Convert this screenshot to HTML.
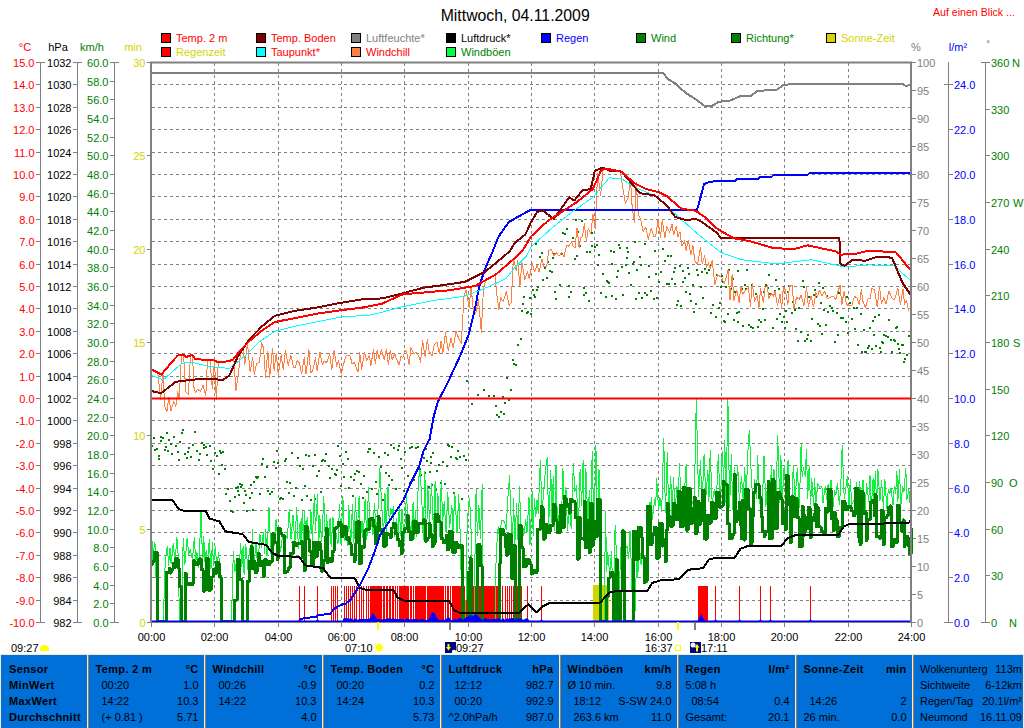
<!DOCTYPE html>
<html><head><meta charset="utf-8"><style>
html,body{margin:0;padding:0;background:#fff;width:1024px;height:728px;overflow:hidden}
svg{display:block;font-family:"Liberation Sans",sans-serif}
</style></head><body>
<svg width="1024" height="728" viewBox="0 0 1024 728">
<text x="515.2" y="21" fill="#000" text-anchor="middle" font-size="15.8" font-weight="normal" >Mittwoch, 04.11.2009</text>
<text x="933" y="16" fill="#ff0000" text-anchor="start" font-size="10.6" font-weight="normal" >Auf einen Blick ...</text>
<rect x="161.5" y="33.5" width="9" height="9" fill="#ff0000" stroke="#000" stroke-width="1"/>
<text x="176" y="42" fill="#ff0000" text-anchor="start" font-size="11" font-weight="normal" >Temp. 2 m</text>
<rect x="161.5" y="47.5" width="9" height="9" fill="#ff0000" stroke="#000" stroke-width="1"/>
<text x="176" y="56" fill="#d4d400" text-anchor="start" font-size="11" font-weight="normal" >Regenzeit</text>
<rect x="256.5" y="33.5" width="9" height="9" fill="#800000" stroke="#000" stroke-width="1"/>
<text x="271" y="42" fill="#ff0000" text-anchor="start" font-size="11" font-weight="normal" >Temp. Boden</text>
<rect x="256.5" y="47.5" width="9" height="9" fill="#00ffff" stroke="#000" stroke-width="1"/>
<text x="271" y="56" fill="#ff0000" text-anchor="start" font-size="11" font-weight="normal" >Taupunkt*</text>
<rect x="351.5" y="33.5" width="9" height="9" fill="#808080" stroke="#000" stroke-width="1"/>
<text x="366" y="42" fill="#808080" text-anchor="start" font-size="11" font-weight="normal" >Luftfeuchte*</text>
<rect x="351.5" y="47.5" width="9" height="9" fill="#ff8040" stroke="#000" stroke-width="1"/>
<text x="366" y="56" fill="#ff0000" text-anchor="start" font-size="11" font-weight="normal" >Windchill</text>
<rect x="446.5" y="33.5" width="9" height="9" fill="#000000" stroke="#000" stroke-width="1"/>
<text x="461" y="42" fill="#000" text-anchor="start" font-size="11" font-weight="normal" >Luftdruck*</text>
<rect x="446.5" y="47.5" width="9" height="9" fill="#00ff40" stroke="#000" stroke-width="1"/>
<text x="461" y="56" fill="#008000" text-anchor="start" font-size="11" font-weight="normal" >Windböen</text>
<rect x="541.5" y="33.5" width="9" height="9" fill="#0000ff" stroke="#000" stroke-width="1"/>
<text x="556" y="42" fill="#0000ff" text-anchor="start" font-size="11" font-weight="normal" >Regen</text>
<rect x="636.5" y="33.5" width="9" height="9" fill="#008000" stroke="#000" stroke-width="1"/>
<text x="651" y="42" fill="#008000" text-anchor="start" font-size="11" font-weight="normal" >Wind</text>
<rect x="731.5" y="33.5" width="9" height="9" fill="#008000" stroke="#000" stroke-width="1"/>
<text x="746" y="42" fill="#008000" text-anchor="start" font-size="11" font-weight="normal" >Richtung*</text>
<rect x="826.5" y="33.5" width="9" height="9" fill="#d4d400" stroke="#000" stroke-width="1"/>
<text x="841" y="42" fill="#d4d400" text-anchor="start" font-size="11" font-weight="normal" >Sonne-Zeit</text>
<text x="25" y="51" fill="#ff0000" text-anchor="middle" font-size="11" font-weight="normal" >°C</text>
<text x="58" y="51" fill="#000" text-anchor="middle" font-size="11" font-weight="normal" >hPa</text>
<text x="92" y="51" fill="#008000" text-anchor="middle" font-size="11" font-weight="normal" >km/h</text>
<text x="133" y="51" fill="#d4d400" text-anchor="middle" font-size="11" font-weight="normal" >min</text>
<text x="916" y="51" fill="#808080" text-anchor="middle" font-size="11" font-weight="normal" >%</text>
<text x="958" y="51" fill="#0000ff" text-anchor="middle" font-size="11" font-weight="normal" >l/m²</text>
<text x="988" y="47" fill="#008000" text-anchor="middle" font-size="9" font-weight="normal" >°</text>
<line x1="40.5" y1="62" x2="40.5" y2="622" stroke="#808080" stroke-width="1" />
<line x1="36" y1="62.5" x2="45" y2="62.5" stroke="#808080" stroke-width="1" />
<line x1="36" y1="622.5" x2="45" y2="622.5" stroke="#808080" stroke-width="1" />
<line x1="36" y1="62.5" x2="41" y2="62.5" stroke="#808080" stroke-width="1" />
<text x="34.5" y="66.5" fill="#ff0000" text-anchor="end" font-size="11" font-weight="normal" >15.0</text>
<line x1="36" y1="84.5" x2="41" y2="84.5" stroke="#808080" stroke-width="1" />
<text x="34.5" y="88.5" fill="#ff0000" text-anchor="end" font-size="11" font-weight="normal" >14.0</text>
<line x1="36" y1="107.5" x2="41" y2="107.5" stroke="#808080" stroke-width="1" />
<text x="34.5" y="111.5" fill="#ff0000" text-anchor="end" font-size="11" font-weight="normal" >13.0</text>
<line x1="36" y1="129.5" x2="41" y2="129.5" stroke="#808080" stroke-width="1" />
<text x="34.5" y="133.5" fill="#ff0000" text-anchor="end" font-size="11" font-weight="normal" >12.0</text>
<line x1="36" y1="152.5" x2="41" y2="152.5" stroke="#808080" stroke-width="1" />
<text x="34.5" y="156.5" fill="#ff0000" text-anchor="end" font-size="11" font-weight="normal" >11.0</text>
<line x1="36" y1="174.5" x2="41" y2="174.5" stroke="#808080" stroke-width="1" />
<text x="34.5" y="178.5" fill="#ff0000" text-anchor="end" font-size="11" font-weight="normal" >10.0</text>
<line x1="36" y1="196.5" x2="41" y2="196.5" stroke="#808080" stroke-width="1" />
<text x="34.5" y="200.5" fill="#ff0000" text-anchor="end" font-size="11" font-weight="normal" >9.0</text>
<line x1="36" y1="219.5" x2="41" y2="219.5" stroke="#808080" stroke-width="1" />
<text x="34.5" y="223.5" fill="#ff0000" text-anchor="end" font-size="11" font-weight="normal" >8.0</text>
<line x1="36" y1="241.5" x2="41" y2="241.5" stroke="#808080" stroke-width="1" />
<text x="34.5" y="245.5" fill="#ff0000" text-anchor="end" font-size="11" font-weight="normal" >7.0</text>
<line x1="36" y1="264.5" x2="41" y2="264.5" stroke="#808080" stroke-width="1" />
<text x="34.5" y="268.5" fill="#ff0000" text-anchor="end" font-size="11" font-weight="normal" >6.0</text>
<line x1="36" y1="286.5" x2="41" y2="286.5" stroke="#808080" stroke-width="1" />
<text x="34.5" y="290.5" fill="#ff0000" text-anchor="end" font-size="11" font-weight="normal" >5.0</text>
<line x1="36" y1="308.5" x2="41" y2="308.5" stroke="#808080" stroke-width="1" />
<text x="34.5" y="312.5" fill="#ff0000" text-anchor="end" font-size="11" font-weight="normal" >4.0</text>
<line x1="36" y1="331.5" x2="41" y2="331.5" stroke="#808080" stroke-width="1" />
<text x="34.5" y="335.5" fill="#ff0000" text-anchor="end" font-size="11" font-weight="normal" >3.0</text>
<line x1="36" y1="353.5" x2="41" y2="353.5" stroke="#808080" stroke-width="1" />
<text x="34.5" y="357.5" fill="#ff0000" text-anchor="end" font-size="11" font-weight="normal" >2.0</text>
<line x1="36" y1="376.5" x2="41" y2="376.5" stroke="#808080" stroke-width="1" />
<text x="34.5" y="380.5" fill="#ff0000" text-anchor="end" font-size="11" font-weight="normal" >1.0</text>
<line x1="36" y1="398.5" x2="41" y2="398.5" stroke="#808080" stroke-width="1" />
<text x="34.5" y="402.5" fill="#ff0000" text-anchor="end" font-size="11" font-weight="normal" >0.0</text>
<line x1="36" y1="420.5" x2="41" y2="420.5" stroke="#808080" stroke-width="1" />
<text x="34.5" y="424.5" fill="#ff0000" text-anchor="end" font-size="11" font-weight="normal" >-1.0</text>
<line x1="36" y1="443.5" x2="41" y2="443.5" stroke="#808080" stroke-width="1" />
<text x="34.5" y="447.5" fill="#ff0000" text-anchor="end" font-size="11" font-weight="normal" >-2.0</text>
<line x1="36" y1="465.5" x2="41" y2="465.5" stroke="#808080" stroke-width="1" />
<text x="34.5" y="469.5" fill="#ff0000" text-anchor="end" font-size="11" font-weight="normal" >-3.0</text>
<line x1="36" y1="488.5" x2="41" y2="488.5" stroke="#808080" stroke-width="1" />
<text x="34.5" y="492.5" fill="#ff0000" text-anchor="end" font-size="11" font-weight="normal" >-4.0</text>
<line x1="36" y1="510.5" x2="41" y2="510.5" stroke="#808080" stroke-width="1" />
<text x="34.5" y="514.5" fill="#ff0000" text-anchor="end" font-size="11" font-weight="normal" >-5.0</text>
<line x1="36" y1="532.5" x2="41" y2="532.5" stroke="#808080" stroke-width="1" />
<text x="34.5" y="536.5" fill="#ff0000" text-anchor="end" font-size="11" font-weight="normal" >-6.0</text>
<line x1="36" y1="555.5" x2="41" y2="555.5" stroke="#808080" stroke-width="1" />
<text x="34.5" y="559.5" fill="#ff0000" text-anchor="end" font-size="11" font-weight="normal" >-7.0</text>
<line x1="36" y1="577.5" x2="41" y2="577.5" stroke="#808080" stroke-width="1" />
<text x="34.5" y="581.5" fill="#ff0000" text-anchor="end" font-size="11" font-weight="normal" >-8.0</text>
<line x1="36" y1="600.5" x2="41" y2="600.5" stroke="#808080" stroke-width="1" />
<text x="34.5" y="604.5" fill="#ff0000" text-anchor="end" font-size="11" font-weight="normal" >-9.0</text>
<line x1="36" y1="622.5" x2="41" y2="622.5" stroke="#808080" stroke-width="1" />
<text x="34.5" y="626.5" fill="#ff0000" text-anchor="end" font-size="11" font-weight="normal" >-10.0</text>
<line x1="77.5" y1="62" x2="77.5" y2="622" stroke="#808080" stroke-width="1" />
<line x1="73" y1="62.5" x2="82" y2="62.5" stroke="#808080" stroke-width="1" />
<line x1="73" y1="622.5" x2="82" y2="622.5" stroke="#808080" stroke-width="1" />
<line x1="73" y1="62.5" x2="78" y2="62.5" stroke="#808080" stroke-width="1" />
<text x="71.5" y="66.5" fill="#000" text-anchor="end" font-size="11" font-weight="normal" >1032</text>
<line x1="73" y1="84.5" x2="78" y2="84.5" stroke="#808080" stroke-width="1" />
<text x="71.5" y="88.5" fill="#000" text-anchor="end" font-size="11" font-weight="normal" >1030</text>
<line x1="73" y1="107.5" x2="78" y2="107.5" stroke="#808080" stroke-width="1" />
<text x="71.5" y="111.5" fill="#000" text-anchor="end" font-size="11" font-weight="normal" >1028</text>
<line x1="73" y1="129.5" x2="78" y2="129.5" stroke="#808080" stroke-width="1" />
<text x="71.5" y="133.5" fill="#000" text-anchor="end" font-size="11" font-weight="normal" >1026</text>
<line x1="73" y1="152.5" x2="78" y2="152.5" stroke="#808080" stroke-width="1" />
<text x="71.5" y="156.5" fill="#000" text-anchor="end" font-size="11" font-weight="normal" >1024</text>
<line x1="73" y1="174.5" x2="78" y2="174.5" stroke="#808080" stroke-width="1" />
<text x="71.5" y="178.5" fill="#000" text-anchor="end" font-size="11" font-weight="normal" >1022</text>
<line x1="73" y1="196.5" x2="78" y2="196.5" stroke="#808080" stroke-width="1" />
<text x="71.5" y="200.5" fill="#000" text-anchor="end" font-size="11" font-weight="normal" >1020</text>
<line x1="73" y1="219.5" x2="78" y2="219.5" stroke="#808080" stroke-width="1" />
<text x="71.5" y="223.5" fill="#000" text-anchor="end" font-size="11" font-weight="normal" >1018</text>
<line x1="73" y1="241.5" x2="78" y2="241.5" stroke="#808080" stroke-width="1" />
<text x="71.5" y="245.5" fill="#000" text-anchor="end" font-size="11" font-weight="normal" >1016</text>
<line x1="73" y1="264.5" x2="78" y2="264.5" stroke="#808080" stroke-width="1" />
<text x="71.5" y="268.5" fill="#000" text-anchor="end" font-size="11" font-weight="normal" >1014</text>
<line x1="73" y1="286.5" x2="78" y2="286.5" stroke="#808080" stroke-width="1" />
<text x="71.5" y="290.5" fill="#000" text-anchor="end" font-size="11" font-weight="normal" >1012</text>
<line x1="73" y1="308.5" x2="78" y2="308.5" stroke="#808080" stroke-width="1" />
<text x="71.5" y="312.5" fill="#000" text-anchor="end" font-size="11" font-weight="normal" >1010</text>
<line x1="73" y1="331.5" x2="78" y2="331.5" stroke="#808080" stroke-width="1" />
<text x="71.5" y="335.5" fill="#000" text-anchor="end" font-size="11" font-weight="normal" >1008</text>
<line x1="73" y1="353.5" x2="78" y2="353.5" stroke="#808080" stroke-width="1" />
<text x="71.5" y="357.5" fill="#000" text-anchor="end" font-size="11" font-weight="normal" >1006</text>
<line x1="73" y1="376.5" x2="78" y2="376.5" stroke="#808080" stroke-width="1" />
<text x="71.5" y="380.5" fill="#000" text-anchor="end" font-size="11" font-weight="normal" >1004</text>
<line x1="73" y1="398.5" x2="78" y2="398.5" stroke="#808080" stroke-width="1" />
<text x="71.5" y="402.5" fill="#000" text-anchor="end" font-size="11" font-weight="normal" >1002</text>
<line x1="73" y1="420.5" x2="78" y2="420.5" stroke="#808080" stroke-width="1" />
<text x="71.5" y="424.5" fill="#000" text-anchor="end" font-size="11" font-weight="normal" >1000</text>
<line x1="73" y1="443.5" x2="78" y2="443.5" stroke="#808080" stroke-width="1" />
<text x="71.5" y="447.5" fill="#000" text-anchor="end" font-size="11" font-weight="normal" >998</text>
<line x1="73" y1="465.5" x2="78" y2="465.5" stroke="#808080" stroke-width="1" />
<text x="71.5" y="469.5" fill="#000" text-anchor="end" font-size="11" font-weight="normal" >996</text>
<line x1="73" y1="488.5" x2="78" y2="488.5" stroke="#808080" stroke-width="1" />
<text x="71.5" y="492.5" fill="#000" text-anchor="end" font-size="11" font-weight="normal" >994</text>
<line x1="73" y1="510.5" x2="78" y2="510.5" stroke="#808080" stroke-width="1" />
<text x="71.5" y="514.5" fill="#000" text-anchor="end" font-size="11" font-weight="normal" >992</text>
<line x1="73" y1="532.5" x2="78" y2="532.5" stroke="#808080" stroke-width="1" />
<text x="71.5" y="536.5" fill="#000" text-anchor="end" font-size="11" font-weight="normal" >990</text>
<line x1="73" y1="555.5" x2="78" y2="555.5" stroke="#808080" stroke-width="1" />
<text x="71.5" y="559.5" fill="#000" text-anchor="end" font-size="11" font-weight="normal" >988</text>
<line x1="73" y1="577.5" x2="78" y2="577.5" stroke="#808080" stroke-width="1" />
<text x="71.5" y="581.5" fill="#000" text-anchor="end" font-size="11" font-weight="normal" >986</text>
<line x1="73" y1="600.5" x2="78" y2="600.5" stroke="#808080" stroke-width="1" />
<text x="71.5" y="604.5" fill="#000" text-anchor="end" font-size="11" font-weight="normal" >984</text>
<line x1="73" y1="622.5" x2="78" y2="622.5" stroke="#808080" stroke-width="1" />
<text x="71.5" y="626.5" fill="#000" text-anchor="end" font-size="11" font-weight="normal" >982</text>
<line x1="114.5" y1="62" x2="114.5" y2="622" stroke="#808080" stroke-width="1" />
<line x1="110" y1="62.5" x2="119" y2="62.5" stroke="#808080" stroke-width="1" />
<line x1="110" y1="622.5" x2="119" y2="622.5" stroke="#808080" stroke-width="1" />
<line x1="110" y1="62.5" x2="115" y2="62.5" stroke="#808080" stroke-width="1" />
<text x="108.5" y="66.5" fill="#008000" text-anchor="end" font-size="11" font-weight="normal" >60.0</text>
<line x1="110" y1="81.5" x2="115" y2="81.5" stroke="#808080" stroke-width="1" />
<text x="108.5" y="85.5" fill="#008000" text-anchor="end" font-size="11" font-weight="normal" >58.0</text>
<line x1="110" y1="99.5" x2="115" y2="99.5" stroke="#808080" stroke-width="1" />
<text x="108.5" y="103.5" fill="#008000" text-anchor="end" font-size="11" font-weight="normal" >56.0</text>
<line x1="110" y1="118.5" x2="115" y2="118.5" stroke="#808080" stroke-width="1" />
<text x="108.5" y="122.5" fill="#008000" text-anchor="end" font-size="11" font-weight="normal" >54.0</text>
<line x1="110" y1="137.5" x2="115" y2="137.5" stroke="#808080" stroke-width="1" />
<text x="108.5" y="141.5" fill="#008000" text-anchor="end" font-size="11" font-weight="normal" >52.0</text>
<line x1="110" y1="155.5" x2="115" y2="155.5" stroke="#808080" stroke-width="1" />
<text x="108.5" y="159.5" fill="#008000" text-anchor="end" font-size="11" font-weight="normal" >50.0</text>
<line x1="110" y1="174.5" x2="115" y2="174.5" stroke="#808080" stroke-width="1" />
<text x="108.5" y="178.5" fill="#008000" text-anchor="end" font-size="11" font-weight="normal" >48.0</text>
<line x1="110" y1="193.5" x2="115" y2="193.5" stroke="#808080" stroke-width="1" />
<text x="108.5" y="197.5" fill="#008000" text-anchor="end" font-size="11" font-weight="normal" >46.0</text>
<line x1="110" y1="211.5" x2="115" y2="211.5" stroke="#808080" stroke-width="1" />
<text x="108.5" y="215.5" fill="#008000" text-anchor="end" font-size="11" font-weight="normal" >44.0</text>
<line x1="110" y1="230.5" x2="115" y2="230.5" stroke="#808080" stroke-width="1" />
<text x="108.5" y="234.5" fill="#008000" text-anchor="end" font-size="11" font-weight="normal" >42.0</text>
<line x1="110" y1="249.5" x2="115" y2="249.5" stroke="#808080" stroke-width="1" />
<text x="108.5" y="253.5" fill="#008000" text-anchor="end" font-size="11" font-weight="normal" >40.0</text>
<line x1="110" y1="267.5" x2="115" y2="267.5" stroke="#808080" stroke-width="1" />
<text x="108.5" y="271.5" fill="#008000" text-anchor="end" font-size="11" font-weight="normal" >38.0</text>
<line x1="110" y1="286.5" x2="115" y2="286.5" stroke="#808080" stroke-width="1" />
<text x="108.5" y="290.5" fill="#008000" text-anchor="end" font-size="11" font-weight="normal" >36.0</text>
<line x1="110" y1="305.5" x2="115" y2="305.5" stroke="#808080" stroke-width="1" />
<text x="108.5" y="309.5" fill="#008000" text-anchor="end" font-size="11" font-weight="normal" >34.0</text>
<line x1="110" y1="323.5" x2="115" y2="323.5" stroke="#808080" stroke-width="1" />
<text x="108.5" y="327.5" fill="#008000" text-anchor="end" font-size="11" font-weight="normal" >32.0</text>
<line x1="110" y1="342.5" x2="115" y2="342.5" stroke="#808080" stroke-width="1" />
<text x="108.5" y="346.5" fill="#008000" text-anchor="end" font-size="11" font-weight="normal" >30.0</text>
<line x1="110" y1="361.5" x2="115" y2="361.5" stroke="#808080" stroke-width="1" />
<text x="108.5" y="365.5" fill="#008000" text-anchor="end" font-size="11" font-weight="normal" >28.0</text>
<line x1="110" y1="379.5" x2="115" y2="379.5" stroke="#808080" stroke-width="1" />
<text x="108.5" y="383.5" fill="#008000" text-anchor="end" font-size="11" font-weight="normal" >26.0</text>
<line x1="110" y1="398.5" x2="115" y2="398.5" stroke="#808080" stroke-width="1" />
<text x="108.5" y="402.5" fill="#008000" text-anchor="end" font-size="11" font-weight="normal" >24.0</text>
<line x1="110" y1="417.5" x2="115" y2="417.5" stroke="#808080" stroke-width="1" />
<text x="108.5" y="421.5" fill="#008000" text-anchor="end" font-size="11" font-weight="normal" >22.0</text>
<line x1="110" y1="435.5" x2="115" y2="435.5" stroke="#808080" stroke-width="1" />
<text x="108.5" y="439.5" fill="#008000" text-anchor="end" font-size="11" font-weight="normal" >20.0</text>
<line x1="110" y1="454.5" x2="115" y2="454.5" stroke="#808080" stroke-width="1" />
<text x="108.5" y="458.5" fill="#008000" text-anchor="end" font-size="11" font-weight="normal" >18.0</text>
<line x1="110" y1="473.5" x2="115" y2="473.5" stroke="#808080" stroke-width="1" />
<text x="108.5" y="477.5" fill="#008000" text-anchor="end" font-size="11" font-weight="normal" >16.0</text>
<line x1="110" y1="491.5" x2="115" y2="491.5" stroke="#808080" stroke-width="1" />
<text x="108.5" y="495.5" fill="#008000" text-anchor="end" font-size="11" font-weight="normal" >14.0</text>
<line x1="110" y1="510.5" x2="115" y2="510.5" stroke="#808080" stroke-width="1" />
<text x="108.5" y="514.5" fill="#008000" text-anchor="end" font-size="11" font-weight="normal" >12.0</text>
<line x1="110" y1="529.5" x2="115" y2="529.5" stroke="#808080" stroke-width="1" />
<text x="108.5" y="533.5" fill="#008000" text-anchor="end" font-size="11" font-weight="normal" >10.0</text>
<line x1="110" y1="547.5" x2="115" y2="547.5" stroke="#808080" stroke-width="1" />
<text x="108.5" y="551.5" fill="#008000" text-anchor="end" font-size="11" font-weight="normal" >8.0</text>
<line x1="110" y1="566.5" x2="115" y2="566.5" stroke="#808080" stroke-width="1" />
<text x="108.5" y="570.5" fill="#008000" text-anchor="end" font-size="11" font-weight="normal" >6.0</text>
<line x1="110" y1="585.5" x2="115" y2="585.5" stroke="#808080" stroke-width="1" />
<text x="108.5" y="589.5" fill="#008000" text-anchor="end" font-size="11" font-weight="normal" >4.0</text>
<line x1="110" y1="603.5" x2="115" y2="603.5" stroke="#808080" stroke-width="1" />
<text x="108.5" y="607.5" fill="#008000" text-anchor="end" font-size="11" font-weight="normal" >2.0</text>
<line x1="110" y1="622.5" x2="115" y2="622.5" stroke="#808080" stroke-width="1" />
<text x="108.5" y="626.5" fill="#008000" text-anchor="end" font-size="11" font-weight="normal" >0.0</text>
<line x1="147" y1="62.5" x2="151" y2="62.5" stroke="#808080" stroke-width="1" />
<text x="145.5" y="66.5" fill="#d4d400" text-anchor="end" font-size="11" font-weight="normal" >30</text>
<line x1="147" y1="155.5" x2="151" y2="155.5" stroke="#808080" stroke-width="1" />
<text x="145.5" y="159.5" fill="#d4d400" text-anchor="end" font-size="11" font-weight="normal" >25</text>
<line x1="147" y1="249.5" x2="151" y2="249.5" stroke="#808080" stroke-width="1" />
<text x="145.5" y="253.5" fill="#d4d400" text-anchor="end" font-size="11" font-weight="normal" >20</text>
<line x1="147" y1="342.5" x2="151" y2="342.5" stroke="#808080" stroke-width="1" />
<text x="145.5" y="346.5" fill="#d4d400" text-anchor="end" font-size="11" font-weight="normal" >15</text>
<line x1="147" y1="435.5" x2="151" y2="435.5" stroke="#808080" stroke-width="1" />
<text x="145.5" y="439.5" fill="#d4d400" text-anchor="end" font-size="11" font-weight="normal" >10</text>
<line x1="147" y1="529.5" x2="151" y2="529.5" stroke="#808080" stroke-width="1" />
<text x="145.5" y="533.5" fill="#d4d400" text-anchor="end" font-size="11" font-weight="normal" >5</text>
<line x1="147" y1="622.5" x2="151" y2="622.5" stroke="#808080" stroke-width="1" />
<text x="145.5" y="626.5" fill="#d4d400" text-anchor="end" font-size="11" font-weight="normal" >0</text>
<line x1="911" y1="62.5" x2="916" y2="62.5" stroke="#808080" stroke-width="1" />
<text x="917" y="66.5" fill="#808080" text-anchor="start" font-size="11" font-weight="normal" >100</text>
<line x1="911" y1="90.5" x2="916" y2="90.5" stroke="#808080" stroke-width="1" />
<text x="917" y="94.5" fill="#808080" text-anchor="start" font-size="11" font-weight="normal" >95</text>
<line x1="911" y1="118.5" x2="916" y2="118.5" stroke="#808080" stroke-width="1" />
<text x="917" y="122.5" fill="#808080" text-anchor="start" font-size="11" font-weight="normal" >90</text>
<line x1="911" y1="146.5" x2="916" y2="146.5" stroke="#808080" stroke-width="1" />
<text x="917" y="150.5" fill="#808080" text-anchor="start" font-size="11" font-weight="normal" >85</text>
<line x1="911" y1="174.5" x2="916" y2="174.5" stroke="#808080" stroke-width="1" />
<text x="917" y="178.5" fill="#808080" text-anchor="start" font-size="11" font-weight="normal" >80</text>
<line x1="911" y1="202.5" x2="916" y2="202.5" stroke="#808080" stroke-width="1" />
<text x="917" y="206.5" fill="#808080" text-anchor="start" font-size="11" font-weight="normal" >75</text>
<line x1="911" y1="230.5" x2="916" y2="230.5" stroke="#808080" stroke-width="1" />
<text x="917" y="234.5" fill="#808080" text-anchor="start" font-size="11" font-weight="normal" >70</text>
<line x1="911" y1="258.5" x2="916" y2="258.5" stroke="#808080" stroke-width="1" />
<text x="917" y="262.5" fill="#808080" text-anchor="start" font-size="11" font-weight="normal" >65</text>
<line x1="911" y1="286.5" x2="916" y2="286.5" stroke="#808080" stroke-width="1" />
<text x="917" y="290.5" fill="#808080" text-anchor="start" font-size="11" font-weight="normal" >60</text>
<line x1="911" y1="314.5" x2="916" y2="314.5" stroke="#808080" stroke-width="1" />
<text x="917" y="318.5" fill="#808080" text-anchor="start" font-size="11" font-weight="normal" >55</text>
<line x1="911" y1="342.5" x2="916" y2="342.5" stroke="#808080" stroke-width="1" />
<text x="917" y="346.5" fill="#808080" text-anchor="start" font-size="11" font-weight="normal" >50</text>
<line x1="911" y1="370.5" x2="916" y2="370.5" stroke="#808080" stroke-width="1" />
<text x="917" y="374.5" fill="#808080" text-anchor="start" font-size="11" font-weight="normal" >45</text>
<line x1="911" y1="398.5" x2="916" y2="398.5" stroke="#808080" stroke-width="1" />
<text x="917" y="402.5" fill="#808080" text-anchor="start" font-size="11" font-weight="normal" >40</text>
<line x1="911" y1="426.5" x2="916" y2="426.5" stroke="#808080" stroke-width="1" />
<text x="917" y="430.5" fill="#808080" text-anchor="start" font-size="11" font-weight="normal" >35</text>
<line x1="911" y1="454.5" x2="916" y2="454.5" stroke="#808080" stroke-width="1" />
<text x="917" y="458.5" fill="#808080" text-anchor="start" font-size="11" font-weight="normal" >30</text>
<line x1="911" y1="482.5" x2="916" y2="482.5" stroke="#808080" stroke-width="1" />
<text x="917" y="486.5" fill="#808080" text-anchor="start" font-size="11" font-weight="normal" >25</text>
<line x1="911" y1="510.5" x2="916" y2="510.5" stroke="#808080" stroke-width="1" />
<text x="917" y="514.5" fill="#808080" text-anchor="start" font-size="11" font-weight="normal" >20</text>
<line x1="911" y1="538.5" x2="916" y2="538.5" stroke="#808080" stroke-width="1" />
<text x="917" y="542.5" fill="#808080" text-anchor="start" font-size="11" font-weight="normal" >15</text>
<line x1="911" y1="566.5" x2="916" y2="566.5" stroke="#808080" stroke-width="1" />
<text x="917" y="570.5" fill="#808080" text-anchor="start" font-size="11" font-weight="normal" >10</text>
<line x1="911" y1="594.5" x2="916" y2="594.5" stroke="#808080" stroke-width="1" />
<text x="917" y="598.5" fill="#808080" text-anchor="start" font-size="11" font-weight="normal" >5</text>
<line x1="911" y1="622.5" x2="916" y2="622.5" stroke="#808080" stroke-width="1" />
<text x="917" y="626.5" fill="#808080" text-anchor="start" font-size="11" font-weight="normal" >0</text>
<line x1="948.5" y1="62" x2="948.5" y2="622" stroke="#808080" stroke-width="1" />
<line x1="944" y1="622.5" x2="953" y2="622.5" stroke="#808080" stroke-width="1" />
<line x1="948" y1="84.5" x2="953" y2="84.5" stroke="#808080" stroke-width="1" />
<text x="954" y="88.5" fill="#0000ff" text-anchor="start" font-size="11" font-weight="normal" >24.0</text>
<line x1="948" y1="129.5" x2="953" y2="129.5" stroke="#808080" stroke-width="1" />
<text x="954" y="133.5" fill="#0000ff" text-anchor="start" font-size="11" font-weight="normal" >22.0</text>
<line x1="948" y1="174.5" x2="953" y2="174.5" stroke="#808080" stroke-width="1" />
<text x="954" y="178.5" fill="#0000ff" text-anchor="start" font-size="11" font-weight="normal" >20.0</text>
<line x1="948" y1="219.5" x2="953" y2="219.5" stroke="#808080" stroke-width="1" />
<text x="954" y="223.5" fill="#0000ff" text-anchor="start" font-size="11" font-weight="normal" >18.0</text>
<line x1="948" y1="264.5" x2="953" y2="264.5" stroke="#808080" stroke-width="1" />
<text x="954" y="268.5" fill="#0000ff" text-anchor="start" font-size="11" font-weight="normal" >16.0</text>
<line x1="948" y1="308.5" x2="953" y2="308.5" stroke="#808080" stroke-width="1" />
<text x="954" y="312.5" fill="#0000ff" text-anchor="start" font-size="11" font-weight="normal" >14.0</text>
<line x1="948" y1="353.5" x2="953" y2="353.5" stroke="#808080" stroke-width="1" />
<text x="954" y="357.5" fill="#0000ff" text-anchor="start" font-size="11" font-weight="normal" >12.0</text>
<line x1="948" y1="398.5" x2="953" y2="398.5" stroke="#808080" stroke-width="1" />
<text x="954" y="402.5" fill="#0000ff" text-anchor="start" font-size="11" font-weight="normal" >10.0</text>
<line x1="948" y1="443.5" x2="953" y2="443.5" stroke="#808080" stroke-width="1" />
<text x="954" y="447.5" fill="#0000ff" text-anchor="start" font-size="11" font-weight="normal" >8.0</text>
<line x1="948" y1="488.5" x2="953" y2="488.5" stroke="#808080" stroke-width="1" />
<text x="954" y="492.5" fill="#0000ff" text-anchor="start" font-size="11" font-weight="normal" >6.0</text>
<line x1="948" y1="532.5" x2="953" y2="532.5" stroke="#808080" stroke-width="1" />
<text x="954" y="536.5" fill="#0000ff" text-anchor="start" font-size="11" font-weight="normal" >4.0</text>
<line x1="948" y1="577.5" x2="953" y2="577.5" stroke="#808080" stroke-width="1" />
<text x="954" y="581.5" fill="#0000ff" text-anchor="start" font-size="11" font-weight="normal" >2.0</text>
<line x1="948" y1="622.5" x2="953" y2="622.5" stroke="#808080" stroke-width="1" />
<text x="954" y="626.5" fill="#0000ff" text-anchor="start" font-size="11" font-weight="normal" >0.0</text>
<line x1="944" y1="84.5" x2="948" y2="84.5" stroke="#808080" stroke-width="1" />
<line x1="985.5" y1="62" x2="985.5" y2="622" stroke="#808080" stroke-width="1" />
<line x1="981" y1="62.5" x2="990" y2="62.5" stroke="#808080" stroke-width="1" />
<line x1="981" y1="622.5" x2="990" y2="622.5" stroke="#808080" stroke-width="1" />
<line x1="985" y1="62.5" x2="990" y2="62.5" stroke="#808080" stroke-width="1" />
<text x="991" y="66.5" fill="#008000" text-anchor="start" font-size="11" font-weight="normal" >360</text>
<text x="1012" y="66.5" fill="#008000" text-anchor="start" font-size="11" font-weight="normal" >N</text>
<line x1="985" y1="109.5" x2="990" y2="109.5" stroke="#808080" stroke-width="1" />
<text x="991" y="113.5" fill="#008000" text-anchor="start" font-size="11" font-weight="normal" >330</text>
<line x1="985" y1="155.5" x2="990" y2="155.5" stroke="#808080" stroke-width="1" />
<text x="991" y="159.5" fill="#008000" text-anchor="start" font-size="11" font-weight="normal" >300</text>
<line x1="985" y1="202.5" x2="990" y2="202.5" stroke="#808080" stroke-width="1" />
<text x="991" y="206.5" fill="#008000" text-anchor="start" font-size="11" font-weight="normal" >270</text>
<text x="1013" y="206.5" fill="#008000" text-anchor="start" font-size="11" font-weight="normal" >W</text>
<line x1="985" y1="249.5" x2="990" y2="249.5" stroke="#808080" stroke-width="1" />
<text x="991" y="253.5" fill="#008000" text-anchor="start" font-size="11" font-weight="normal" >240</text>
<line x1="985" y1="295.5" x2="990" y2="295.5" stroke="#808080" stroke-width="1" />
<text x="991" y="299.5" fill="#008000" text-anchor="start" font-size="11" font-weight="normal" >210</text>
<line x1="985" y1="342.5" x2="990" y2="342.5" stroke="#808080" stroke-width="1" />
<text x="991" y="346.5" fill="#008000" text-anchor="start" font-size="11" font-weight="normal" >180</text>
<text x="1013" y="346.5" fill="#008000" text-anchor="start" font-size="11" font-weight="normal" >S</text>
<line x1="985" y1="389.5" x2="990" y2="389.5" stroke="#808080" stroke-width="1" />
<text x="991" y="393.5" fill="#008000" text-anchor="start" font-size="11" font-weight="normal" >150</text>
<line x1="985" y1="435.5" x2="990" y2="435.5" stroke="#808080" stroke-width="1" />
<text x="991" y="439.5" fill="#008000" text-anchor="start" font-size="11" font-weight="normal" >120</text>
<line x1="985" y1="482.5" x2="990" y2="482.5" stroke="#808080" stroke-width="1" />
<text x="991" y="486.5" fill="#008000" text-anchor="start" font-size="11" font-weight="normal" >90</text>
<text x="1009" y="486.5" fill="#008000" text-anchor="start" font-size="11" font-weight="normal" >O</text>
<line x1="985" y1="529.5" x2="990" y2="529.5" stroke="#808080" stroke-width="1" />
<text x="991" y="533.5" fill="#008000" text-anchor="start" font-size="11" font-weight="normal" >60</text>
<line x1="985" y1="575.5" x2="990" y2="575.5" stroke="#808080" stroke-width="1" />
<text x="991" y="579.5" fill="#008000" text-anchor="start" font-size="11" font-weight="normal" >30</text>
<line x1="985" y1="622.5" x2="990" y2="622.5" stroke="#808080" stroke-width="1" />
<text x="991" y="626.5" fill="#008000" text-anchor="start" font-size="11" font-weight="normal" >0</text>
<text x="1009" y="626.5" fill="#008000" text-anchor="start" font-size="11" font-weight="normal" >N</text>
<line x1="152" y1="84.5" x2="911" y2="84.5" stroke="#808080" stroke-width="1" stroke-dasharray="3 3"/>
<line x1="152" y1="107.5" x2="911" y2="107.5" stroke="#808080" stroke-width="1" stroke-dasharray="3 3"/>
<line x1="152" y1="129.5" x2="911" y2="129.5" stroke="#808080" stroke-width="1" stroke-dasharray="3 3"/>
<line x1="152" y1="152.5" x2="911" y2="152.5" stroke="#808080" stroke-width="1" stroke-dasharray="3 3"/>
<line x1="152" y1="174.5" x2="911" y2="174.5" stroke="#808080" stroke-width="1" stroke-dasharray="3 3"/>
<line x1="152" y1="196.5" x2="911" y2="196.5" stroke="#808080" stroke-width="1" stroke-dasharray="3 3"/>
<line x1="152" y1="219.5" x2="911" y2="219.5" stroke="#808080" stroke-width="1" stroke-dasharray="3 3"/>
<line x1="152" y1="241.5" x2="911" y2="241.5" stroke="#808080" stroke-width="1" stroke-dasharray="3 3"/>
<line x1="152" y1="264.5" x2="911" y2="264.5" stroke="#808080" stroke-width="1" stroke-dasharray="3 3"/>
<line x1="152" y1="286.5" x2="911" y2="286.5" stroke="#808080" stroke-width="1" stroke-dasharray="3 3"/>
<line x1="152" y1="308.5" x2="911" y2="308.5" stroke="#808080" stroke-width="1" stroke-dasharray="3 3"/>
<line x1="152" y1="331.5" x2="911" y2="331.5" stroke="#808080" stroke-width="1" stroke-dasharray="3 3"/>
<line x1="152" y1="353.5" x2="911" y2="353.5" stroke="#808080" stroke-width="1" stroke-dasharray="3 3"/>
<line x1="152" y1="376.5" x2="911" y2="376.5" stroke="#808080" stroke-width="1" stroke-dasharray="3 3"/>
<line x1="152" y1="420.5" x2="911" y2="420.5" stroke="#808080" stroke-width="1" stroke-dasharray="3 3"/>
<line x1="152" y1="443.5" x2="911" y2="443.5" stroke="#808080" stroke-width="1" stroke-dasharray="3 3"/>
<line x1="152" y1="465.5" x2="911" y2="465.5" stroke="#808080" stroke-width="1" stroke-dasharray="3 3"/>
<line x1="152" y1="488.5" x2="911" y2="488.5" stroke="#808080" stroke-width="1" stroke-dasharray="3 3"/>
<line x1="152" y1="510.5" x2="911" y2="510.5" stroke="#808080" stroke-width="1" stroke-dasharray="3 3"/>
<line x1="152" y1="532.5" x2="911" y2="532.5" stroke="#808080" stroke-width="1" stroke-dasharray="3 3"/>
<line x1="152" y1="555.5" x2="911" y2="555.5" stroke="#808080" stroke-width="1" stroke-dasharray="3 3"/>
<line x1="152" y1="577.5" x2="911" y2="577.5" stroke="#808080" stroke-width="1" stroke-dasharray="3 3"/>
<line x1="152" y1="600.5" x2="911" y2="600.5" stroke="#808080" stroke-width="1" stroke-dasharray="3 3"/>
<line x1="214.5" y1="63" x2="214.5" y2="622" stroke="#808080" stroke-width="1" stroke-dasharray="3 3"/>
<line x1="278.5" y1="63" x2="278.5" y2="622" stroke="#808080" stroke-width="1" stroke-dasharray="3 3"/>
<line x1="341.5" y1="63" x2="341.5" y2="622" stroke="#808080" stroke-width="1" stroke-dasharray="3 3"/>
<line x1="404.5" y1="63" x2="404.5" y2="622" stroke="#808080" stroke-width="1" stroke-dasharray="3 3"/>
<line x1="468.5" y1="63" x2="468.5" y2="622" stroke="#808080" stroke-width="1" stroke-dasharray="3 3"/>
<line x1="531.5" y1="63" x2="531.5" y2="622" stroke="#808080" stroke-width="1" stroke-dasharray="3 3"/>
<line x1="594.5" y1="63" x2="594.5" y2="622" stroke="#808080" stroke-width="1" stroke-dasharray="3 3"/>
<line x1="658.5" y1="63" x2="658.5" y2="622" stroke="#808080" stroke-width="1" stroke-dasharray="3 3"/>
<line x1="721.5" y1="63" x2="721.5" y2="622" stroke="#808080" stroke-width="1" stroke-dasharray="3 3"/>
<line x1="784.5" y1="63" x2="784.5" y2="622" stroke="#808080" stroke-width="1" stroke-dasharray="3 3"/>
<line x1="848.5" y1="63" x2="848.5" y2="622" stroke="#808080" stroke-width="1" stroke-dasharray="3 3"/>
<line x1="151.5" y1="622" x2="151.5" y2="627" stroke="#808080" stroke-width="1" />
<text x="151.5" y="641" fill="#000" text-anchor="middle" font-size="11" font-weight="normal" >00:00</text>
<line x1="214.5" y1="622" x2="214.5" y2="627" stroke="#808080" stroke-width="1" />
<text x="214.5" y="641" fill="#000" text-anchor="middle" font-size="11" font-weight="normal" >02:00</text>
<line x1="278.5" y1="622" x2="278.5" y2="627" stroke="#808080" stroke-width="1" />
<text x="278.5" y="641" fill="#000" text-anchor="middle" font-size="11" font-weight="normal" >04:00</text>
<line x1="341.5" y1="622" x2="341.5" y2="627" stroke="#808080" stroke-width="1" />
<text x="341.5" y="641" fill="#000" text-anchor="middle" font-size="11" font-weight="normal" >06:00</text>
<line x1="404.5" y1="622" x2="404.5" y2="627" stroke="#808080" stroke-width="1" />
<text x="404.5" y="641" fill="#000" text-anchor="middle" font-size="11" font-weight="normal" >08:00</text>
<line x1="468.5" y1="622" x2="468.5" y2="627" stroke="#808080" stroke-width="1" />
<text x="468.5" y="641" fill="#000" text-anchor="middle" font-size="11" font-weight="normal" >10:00</text>
<line x1="531.5" y1="622" x2="531.5" y2="627" stroke="#808080" stroke-width="1" />
<text x="531.5" y="641" fill="#000" text-anchor="middle" font-size="11" font-weight="normal" >12:00</text>
<line x1="594.5" y1="622" x2="594.5" y2="627" stroke="#808080" stroke-width="1" />
<text x="594.5" y="641" fill="#000" text-anchor="middle" font-size="11" font-weight="normal" >14:00</text>
<line x1="658.5" y1="622" x2="658.5" y2="627" stroke="#808080" stroke-width="1" />
<text x="658.5" y="641" fill="#000" text-anchor="middle" font-size="11" font-weight="normal" >16:00</text>
<line x1="721.5" y1="622" x2="721.5" y2="627" stroke="#808080" stroke-width="1" />
<text x="721.5" y="641" fill="#000" text-anchor="middle" font-size="11" font-weight="normal" >18:00</text>
<line x1="784.5" y1="622" x2="784.5" y2="627" stroke="#808080" stroke-width="1" />
<text x="784.5" y="641" fill="#000" text-anchor="middle" font-size="11" font-weight="normal" >20:00</text>
<line x1="848.5" y1="622" x2="848.5" y2="627" stroke="#808080" stroke-width="1" />
<text x="848.5" y="641" fill="#000" text-anchor="middle" font-size="11" font-weight="normal" >22:00</text>
<line x1="911.5" y1="622" x2="911.5" y2="627" stroke="#808080" stroke-width="1" />
<text x="911.5" y="641" fill="#000" text-anchor="middle" font-size="11" font-weight="normal" >24:00</text>
<path d="M299.5,586V622M304.5,586V622M317.5,586V622M331.5,586V622M333.5,586V622M335.5,586V622M337.5,586V622M344.5,586V622M346.5,586V622M348.5,586V622M350.5,586V622M352.5,586V622M354.5,586V622M356.5,586V622M359.5,586V622M361.5,586V622M363.5,586V622M366.5,586V622M368.5,586V622M370.5,586V622M371.5,586V622M372.5,586V622M373.5,586V622M374.5,586V622M375.5,586V622M376.5,586V622M377.5,586V622M378.5,586V622M379.5,586V622M380.5,586V622M381.5,586V622M383.5,586V622M384.5,586V622M386.5,586V622M387.5,586V622M389.5,586V622M390.5,586V622M392.5,586V622M393.5,586V622M395.5,586V622M397.5,586V622M399.5,586V622M400.5,586V622M401.5,586V622M402.5,586V622M403.5,586V622M404.5,586V622M405.5,586V622M406.5,586V622M407.5,586V622M408.5,586V622M410.5,586V622M411.5,586V622M413.5,586V622M415.5,586V622M416.5,586V622M417.5,586V622M418.5,586V622M419.5,586V622M420.5,586V622M421.5,586V622M422.5,586V622M423.5,586V622M424.5,586V622M425.5,586V622M427.5,586V622M428.5,586V622M429.5,586V622M430.5,586V622M431.5,586V622M432.5,586V622M433.5,586V622M434.5,586V622M435.5,586V622M436.5,586V622M437.5,586V622M438.5,586V622M439.5,586V622M440.5,586V622M441.5,586V622M442.5,586V622M443.5,586V622M445.5,586V622M447.5,586V622M448.5,586V622M450.5,586V622M452.5,586V622M453.5,586V622M454.5,586V622M455.5,586V622M456.5,586V622M457.5,586V622M458.5,586V622M459.5,586V622M460.5,586V622M462.5,586V622M464.5,586V622M466.5,586V622M467.5,586V622M468.5,586V622M469.5,586V622M470.5,586V622M471.5,586V622M472.5,586V622M473.5,586V622M474.5,586V622M475.5,586V622M476.5,586V622M477.5,586V622M478.5,586V622M479.5,586V622M480.5,586V622M481.5,586V622M482.5,586V622M483.5,586V622M484.5,586V622M485.5,586V622M486.5,586V622M487.5,586V622M488.5,586V622M489.5,586V622M490.5,586V622M491.5,586V622M492.5,586V622M493.5,586V622M494.5,586V622M495.5,586V622M496.5,586V622M497.5,586V622M498.5,586V622M499.5,586V622M500.5,586V622M502.5,586V622M505.5,586V622M507.5,586V622M509.5,586V622M511.5,586V622M513.5,586V622M515.5,586V622M517.5,586V622M519.5,586V622M521.5,586V622M527.5,586V622M541.5,586V622M698.5,586V622M699.5,586V622M700.5,586V622M701.5,586V622M702.5,586V622M703.5,586V622M704.5,586V622M705.5,586V622M706.5,586V622M707.5,586V622M715.5,586V622M739.5,586V622M760.5,586V622M770.5,586V622M810.5,586V622" stroke="#ff0000" stroke-width="1" fill="none"/>
<rect x="593" y="585" width="16" height="37" fill="#d4d400"/>
<path d="M151,445h2v2h-2zM153,437h2v2h-2zM154,449h2v2h-2zM156,448h2v2h-2zM158,458h2v2h-2zM158,455h2v2h-2zM160,436h2v2h-2zM160,440h2v2h-2zM162,437h2v2h-2zM164,449h2v2h-2zM165,446h2v2h-2zM166,432h2v2h-2zM167,450h2v2h-2zM168,439h2v2h-2zM170,443h2v2h-2zM171,453h2v2h-2zM173,436h2v2h-2zM175,445h2v2h-2zM177,451h2v2h-2zM178,459h2v2h-2zM179,441h2v2h-2zM181,432h2v2h-2zM182,429h2v2h-2zM184,453h2v2h-2zM186,457h2v2h-2zM187,451h2v2h-2zM188,447h2v2h-2zM190,456h2v2h-2zM192,444h2v2h-2zM194,431h2v2h-2zM196,450h2v2h-2zM198,459h2v2h-2zM199,453h2v2h-2zM201,442h2v2h-2zM203,447h2v2h-2zM203,444h2v2h-2zM205,446h2v2h-2zM206,454h2v2h-2zM209,445h2v2h-2zM210,460h2v2h-2zM212,468h2v2h-2zM214,452h2v2h-2zM216,455h2v2h-2zM218,473h2v2h-2zM219,450h2v2h-2zM220,452h2v2h-2zM221,464h2v2h-2zM222,451h2v2h-2zM224,468h2v2h-2zM225,493h2v2h-2zM227,488h2v2h-2zM229,500h2v2h-2zM230,510h2v2h-2zM232,511h2v2h-2zM234,496h2v2h-2zM235,487h2v2h-2zM237,486h2v2h-2zM237,490h2v2h-2zM238,494h2v2h-2zM239,483h2v2h-2zM240,486h2v2h-2zM241,484h2v2h-2zM243,502h2v2h-2zM244,490h2v2h-2zM245,494h2v2h-2zM246,510h2v2h-2zM249,497h2v2h-2zM250,484h2v2h-2zM251,492h2v2h-2zM252,509h2v2h-2zM253,481h2v2h-2zM255,476h2v2h-2zM256,477h2v2h-2zM257,476h2v2h-2zM259,493h2v2h-2zM261,463h2v2h-2zM262,458h2v2h-2zM264,476h2v2h-2zM266,466h2v2h-2zM267,490h2v2h-2zM269,493h2v2h-2zM271,491h2v2h-2zM273,461h2v2h-2zM275,467h2v2h-2zM276,450h2v2h-2zM277,462h2v2h-2zM279,498h2v2h-2zM280,497h2v2h-2zM282,498h2v2h-2zM284,460h2v2h-2zM285,458h2v2h-2zM286,481h2v2h-2zM288,492h2v2h-2zM289,482h2v2h-2zM291,452h2v2h-2zM293,495h2v2h-2zM295,487h2v2h-2zM297,457h2v2h-2zM299,465h2v2h-2zM301,499h2v2h-2zM302,468h2v2h-2zM304,485h2v2h-2zM305,454h2v2h-2zM306,495h2v2h-2zM308,455h2v2h-2zM310,499h2v2h-2zM312,465h2v2h-2zM314,454h2v2h-2zM314,498h2v2h-2zM316,475h2v2h-2zM318,470h2v2h-2zM320,491h2v2h-2zM321,460h2v2h-2zM322,459h2v2h-2zM324,460h2v2h-2zM325,453h2v2h-2zM328,465h2v2h-2zM329,477h2v2h-2zM331,468h2v2h-2zM334,473h2v2h-2zM335,474h2v2h-2zM336,469h2v2h-2zM337,445h2v2h-2zM339,455h2v2h-2zM340,485h2v2h-2zM342,463h2v2h-2zM343,476h2v2h-2zM345,451h2v2h-2zM347,458h2v2h-2zM348,487h2v2h-2zM350,476h2v2h-2zM352,495h2v2h-2zM353,479h2v2h-2zM354,473h2v2h-2zM356,470h2v2h-2zM358,471h2v2h-2zM360,483h2v2h-2zM362,497h2v2h-2zM363,475h2v2h-2zM366,491h2v2h-2zM367,451h2v2h-2zM368,448h2v2h-2zM369,448h2v2h-2zM371,488h2v2h-2zM373,452h2v2h-2zM375,481h2v2h-2zM376,493h2v2h-2zM378,456h2v2h-2zM380,466h2v2h-2zM382,499h2v2h-2zM384,452h2v2h-2zM385,472h2v2h-2zM387,454h2v2h-2zM388,484h2v2h-2zM388,475h2v2h-2zM390,444h2v2h-2zM391,479h2v2h-2zM393,447h2v2h-2zM395,488h2v2h-2zM397,449h2v2h-2zM398,445h2v2h-2zM400,458h2v2h-2zM401,467h2v2h-2zM403,490h2v2h-2zM404,451h2v2h-2zM407,475h2v2h-2zM409,447h2v2h-2zM409,482h2v2h-2zM411,446h2v2h-2zM413,479h2v2h-2zM415,447h2v2h-2zM417,446h2v2h-2zM419,468h2v2h-2zM420,474h2v2h-2zM423,457h2v2h-2zM424,472h2v2h-2zM425,448h2v2h-2zM425,445h2v2h-2zM426,460h2v2h-2zM428,486h2v2h-2zM429,471h2v2h-2zM430,462h2v2h-2zM430,456h2v2h-2zM431,484h2v2h-2zM432,452h2v2h-2zM434,496h2v2h-2zM435,489h2v2h-2zM436,470h2v2h-2zM438,464h2v2h-2zM440,482h2v2h-2zM442,461h2v2h-2zM444,483h2v2h-2zM446,465h2v2h-2zM447,444h2v2h-2zM448,445h2v2h-2zM450,456h2v2h-2zM451,446h2v2h-2zM453,492h2v2h-2zM455,457h2v2h-2zM456,458h2v2h-2zM457,450h2v2h-2zM459,456h2v2h-2zM461,498h2v2h-2zM463,455h2v2h-2zM465,459h2v2h-2zM466,380h2v2h-2zM471,403h2v2h-2zM477,394h2v2h-2zM483,389h2v2h-2zM488,395h2v2h-2zM493,395h2v2h-2zM495,405h2v2h-2zM496,414h2v2h-2zM498,416h2v2h-2zM500,411h2v2h-2zM502,396h2v2h-2zM503,413h2v2h-2zM504,402h2v2h-2zM506,377h2v2h-2zM508,399h2v2h-2zM510,389h2v2h-2zM512,359h2v2h-2zM513,363h2v2h-2zM515,364h2v2h-2zM517,344h2v2h-2zM520,338h2v2h-2zM521,310h2v2h-2zM522,303h2v2h-2zM523,296h2v2h-2zM526,312h2v2h-2zM527,311h2v2h-2zM529,297h2v2h-2zM530,313h2v2h-2zM532,289h2v2h-2zM533,294h2v2h-2zM534,296h2v2h-2zM535,243h2v2h-2zM536,289h2v2h-2zM537,286h2v2h-2zM539,256h2v2h-2zM541,252h2v2h-2zM542,279h2v2h-2zM544,267h2v2h-2zM545,222h2v2h-2zM546,277h2v2h-2zM547,261h2v2h-2zM548,215h2v2h-2zM549,270h2v2h-2zM551,271h2v2h-2zM552,257h2v2h-2zM553,253h2v2h-2zM554,291h2v2h-2zM555,298h2v2h-2zM557,214h2v2h-2zM559,284h2v2h-2zM561,253h2v2h-2zM562,232h2v2h-2zM564,233h2v2h-2zM566,228h2v2h-2zM568,296h2v2h-2zM568,285h2v2h-2zM570,291h2v2h-2zM572,237h2v2h-2zM574,258h2v2h-2zM575,219h2v2h-2zM576,255h2v2h-2zM577,231h2v2h-2zM579,245h2v2h-2zM581,220h2v2h-2zM583,287h2v2h-2zM583,294h2v2h-2zM585,292h2v2h-2zM586,251h2v2h-2zM588,300h2v2h-2zM589,251h2v2h-2zM591,245h2v2h-2zM591,232h2v2h-2zM594,246h2v2h-2zM596,244h2v2h-2zM597,264h2v2h-2zM598,254h2v2h-2zM600,292h2v2h-2zM602,273h2v2h-2zM605,296h2v2h-2zM606,280h2v2h-2zM607,281h2v2h-2zM608,282h2v2h-2zM610,250h2v2h-2zM611,295h2v2h-2zM611,263h2v2h-2zM613,251h2v2h-2zM615,298h2v2h-2zM616,276h2v2h-2zM617,270h2v2h-2zM618,244h2v2h-2zM619,247h2v2h-2zM621,266h2v2h-2zM622,294h2v2h-2zM625,264h2v2h-2zM626,247h2v2h-2zM626,257h2v2h-2zM627,251h2v2h-2zM628,272h2v2h-2zM630,284h2v2h-2zM632,263h2v2h-2zM633,261h2v2h-2zM634,241h2v2h-2zM635,298h2v2h-2zM636,269h2v2h-2zM638,292h2v2h-2zM639,256h2v2h-2zM640,264h2v2h-2zM641,297h2v2h-2zM644,292h2v2h-2zM644,243h2v2h-2zM646,294h2v2h-2zM648,276h2v2h-2zM648,265h2v2h-2zM650,290h2v2h-2zM653,298h2v2h-2zM654,250h2v2h-2zM655,273h2v2h-2zM656,297h2v2h-2zM658,281h2v2h-2zM660,271h2v2h-2zM662,248h2v2h-2zM664,260h2v2h-2zM666,283h2v2h-2zM667,255h2v2h-2zM668,283h2v2h-2zM670,255h2v2h-2zM671,278h2v2h-2zM673,271h2v2h-2zM674,283h2v2h-2zM674,267h2v2h-2zM676,304h2v2h-2zM677,300h2v2h-2zM679,265h2v2h-2zM680,305h2v2h-2zM682,270h2v2h-2zM682,281h2v2h-2zM684,277h2v2h-2zM685,291h2v2h-2zM687,267h2v2h-2zM688,273h2v2h-2zM689,293h2v2h-2zM690,300h2v2h-2zM692,284h2v2h-2zM693,311h2v2h-2zM695,303h2v2h-2zM696,269h2v2h-2zM697,274h2v2h-2zM700,286h2v2h-2zM701,271h2v2h-2zM702,297h2v2h-2zM704,268h2v2h-2zM706,272h2v2h-2zM708,269h2v2h-2zM709,265h2v2h-2zM710,312h2v2h-2zM712,304h2v2h-2zM715,316h2v2h-2zM716,274h2v2h-2zM718,307h2v2h-2zM719,302h2v2h-2zM720,286h2v2h-2zM721,275h2v2h-2zM722,281h2v2h-2zM723,320h2v2h-2zM724,321h2v2h-2zM725,286h2v2h-2zM727,313h2v2h-2zM728,269h2v2h-2zM730,288h2v2h-2zM732,278h2v2h-2zM733,319h2v2h-2zM734,291h2v2h-2zM736,312h2v2h-2zM737,270h2v2h-2zM737,321h2v2h-2zM738,311h2v2h-2zM741,288h2v2h-2zM742,325h2v2h-2zM744,284h2v2h-2zM745,288h2v2h-2zM746,269h2v2h-2zM748,324h2v2h-2zM750,326h2v2h-2zM751,284h2v2h-2zM752,327h2v2h-2zM755,293h2v2h-2zM756,296h2v2h-2zM757,326h2v2h-2zM758,319h2v2h-2zM760,321h2v2h-2zM762,308h2v2h-2zM763,291h2v2h-2zM764,319h2v2h-2zM765,284h2v2h-2zM767,287h2v2h-2zM768,274h2v2h-2zM769,293h2v2h-2zM772,327h2v2h-2zM774,290h2v2h-2zM775,279h2v2h-2zM776,318h2v2h-2zM778,288h2v2h-2zM779,313h2v2h-2zM781,321h2v2h-2zM783,316h2v2h-2zM784,327h2v2h-2zM785,310h2v2h-2zM786,321h2v2h-2zM787,291h2v2h-2zM788,285h2v2h-2zM791,312h2v2h-2zM792,301h2v2h-2zM794,309h2v2h-2zM795,328h2v2h-2zM797,340h2v2h-2zM798,307h2v2h-2zM800,331h2v2h-2zM802,280h2v2h-2zM803,286h2v2h-2zM804,340h2v2h-2zM806,338h2v2h-2zM807,334h2v2h-2zM808,296h2v2h-2zM810,340h2v2h-2zM811,318h2v2h-2zM813,294h2v2h-2zM814,289h2v2h-2zM815,296h2v2h-2zM817,323h2v2h-2zM818,282h2v2h-2zM819,325h2v2h-2zM820,302h2v2h-2zM821,333h2v2h-2zM822,287h2v2h-2zM823,309h2v2h-2zM825,324h2v2h-2zM826,295h2v2h-2zM827,311h2v2h-2zM829,305h2v2h-2zM831,307h2v2h-2zM832,310h2v2h-2zM834,341h2v2h-2zM836,312h2v2h-2zM837,334h2v2h-2zM838,292h2v2h-2zM840,317h2v2h-2zM842,317h2v2h-2zM845,321h2v2h-2zM846,296h2v2h-2zM847,332h2v2h-2zM849,302h2v2h-2zM851,318h2v2h-2zM853,307h2v2h-2zM854,328h2v2h-2zM856,307h2v2h-2zM857,344h2v2h-2zM860,313h2v2h-2zM861,351h2v2h-2zM863,329h2v2h-2zM864,351h2v2h-2zM865,351h2v2h-2zM867,347h2v2h-2zM868,345h2v2h-2zM869,327h2v2h-2zM871,348h2v2h-2zM872,320h2v2h-2zM873,334h2v2h-2zM874,316h2v2h-2zM875,345h2v2h-2zM878,314h2v2h-2zM879,347h2v2h-2zM880,351h2v2h-2zM881,341h2v2h-2zM882,342h2v2h-2zM883,334h2v2h-2zM885,335h2v2h-2zM887,336h2v2h-2zM888,319h2v2h-2zM890,339h2v2h-2zM891,351h2v2h-2zM893,339h2v2h-2zM894,340h2v2h-2zM895,327h2v2h-2zM896,326h2v2h-2zM897,343h2v2h-2zM898,348h2v2h-2zM899,352h2v2h-2zM901,344h2v2h-2zM902,344h2v2h-2zM903,361h2v2h-2zM904,358h2v2h-2zM906,354h2v2h-2zM908,335h2v2h-2z" fill="#008000"/>
<polyline points="151.0,520.0 153.1,564.0 154.3,542.4 155.4,545.1 156.8,621.0 158.7,621.0 159.9,621.0 162.0,621.0 163.3,621.0 165.3,559.4 167.4,546.1 168.6,565.4 170.0,548.2 171.1,564.2 173.2,543.6 175.0,562.4 176.9,537.1 178.1,554.4 179.5,621.0 181.6,621.0 183.2,538.3 184.9,564.3 187.1,538.2 188.9,555.0 190.2,549.1 192.4,560.4 194.3,537.8 195.8,561.6 196.9,552.4 198.9,568.1 201.0,512.0 202.7,564.7 203.8,536.2 204.8,561.5 206.3,550.3 207.9,565.3 209.2,539.7 211.0,568.6 212.4,542.5 213.5,565.5 215.2,546.8 216.9,566.1 218.5,552.9 219.7,563.7 220.9,621.0 222.0,621.0 223.7,621.0 225.8,621.0 227.7,621.0 229.2,621.0 230.5,621.0 231.5,621.0 233.3,551.9 235.0,571.5 236.5,560.5 238.6,576.7 240.7,543.6 241.8,567.0 243.1,546.3 244.1,575.1 245.8,544.9 247.9,569.8 249.6,548.0 251.3,561.1 252.5,530.0 253.8,570.6 255.9,542.4 257.8,569.8 259.9,534.4 261.8,547.1 263.3,532.8 264.6,553.9 265.6,529.8 267.0,556.4 269.0,507.2 270.9,553.2 272.4,532.6 274.4,545.5 276.1,518.9 278.3,548.9 279.3,538.5 280.6,551.8 282.7,534.4 284.6,541.9 286.0,535.6 287.3,538.9 289.2,509.8 291.0,539.1 293.0,515.1 294.8,543.8 296.7,507.4 298.4,548.4 300.1,521.5 301.2,545.3 302.2,511.6 303.4,540.7 304.5,510.1 305.6,532.4 307.3,517.6 309.2,549.7 310.9,509.0 312.3,540.2 314.4,494.6 315.4,530.6 317.6,494.3 318.7,547.2 319.8,515.9 321.8,541.7 323.8,496.2 325.5,546.7 326.6,514.3 328.5,544.6 330.1,517.9 331.1,547.0 332.9,517.0 334.4,532.6 336.0,533.0 338.0,544.1 339.5,505.0 341.0,544.4 342.9,496.1 344.5,540.3 345.6,527.3 347.6,545.1 348.8,505.4 350.8,543.8 352.4,504.2 353.9,542.4 355.5,497.2 357.0,539.5 359.1,496.1 360.4,539.9 362.0,520.8 363.2,540.8 365.1,499.7 366.9,539.8 368.4,487.4 369.8,521.3 370.9,517.6 373.0,534.8 374.3,503.7 376.4,530.3 378.5,502.1 379.8,468.0 381.7,505.3 383.6,535.7 385.0,493.0 386.1,532.0 388.0,487.0 389.2,520.9 390.9,508.6 392.1,514.7 393.4,506.6 394.6,536.1 396.6,518.0 397.8,537.0 399.2,507.8 400.8,536.0 402.0,509.1 404.2,541.7 406.4,494.3 407.5,511.9 409.4,522.2 411.3,533.6 413.1,502.3 414.2,538.3 415.3,510.4 416.7,536.4 418.3,480.9 420.1,470.0 421.8,500.0 423.3,539.9 424.8,471.8 426.5,541.5 427.8,485.3 429.6,523.1 431.5,483.3 433.5,532.3 435.1,481.5 436.4,536.5 437.9,493.1 439.9,536.2 441.2,480.0 442.7,521.1 444.2,501.3 446.0,532.2 447.8,492.9 449.7,527.4 451.9,505.1 452.9,531.9 454.9,493.6 457.0,533.4 458.7,494.6 460.3,536.4 462.1,621.0 464.1,621.0 465.7,621.0 467.2,521.9 469.3,498.2 470.8,517.0 472.7,621.0 473.9,621.0 476.1,489.0 477.4,535.7 478.9,505.3 480.4,538.6 482.2,484.6 483.5,621.0 485.4,621.0 487.5,621.0 489.1,621.0 490.4,621.0 492.4,621.0 493.8,621.0 495.1,621.0 496.2,552.3 498.2,526.4 499.7,540.8 501.4,520.8 502.8,520.8 504.6,521.3 506.2,529.9 507.5,503.1 509.5,476.0 510.9,513.5 512.4,543.1 513.7,498.9 514.7,547.7 516.6,503.0 517.9,539.6 519.5,486.7 521.3,540.2 522.7,525.3 523.8,535.6 525.8,519.8 527.0,532.3 529.0,497.3 530.0,544.9 532.1,491.6 533.2,535.6 534.4,498.7 535.8,516.7 537.0,500.1 538.2,513.2 540.3,460.9 542.1,512.0 544.1,486.5 545.4,470.0 547.2,457.9 548.7,525.6 550.8,470.5 552.1,526.7 553.2,476.2 554.8,531.1 556.0,464.9 557.6,530.5 559.7,508.2 561.2,530.5 562.9,468.3 564.3,504.5 565.9,487.4 567.6,530.6 569.4,501.1 571.2,528.4 573.3,463.8 574.9,491.6 576.5,485.9 578.4,530.4 580.1,468.8 581.6,505.2 583.1,460.2 584.4,528.9 585.9,468.3 587.9,523.9 589.3,490.7 590.9,519.1 592.2,451.3 594.0,532.4 595.9,445.0 597.3,521.8 599.0,469.0 600.0,513.0 601.9,621.0 604.0,621.0 605.6,511.9 606.6,571.2 607.8,552.1 609.6,574.3 611.6,551.5 613.3,621.0 615.1,525.3 616.9,564.5 618.2,621.0 620.0,570.8 621.5,536.0 622.7,577.4 623.8,540.2 625.6,548.9 627.0,546.1 628.7,559.0 630.0,530.9 631.4,568.6 632.9,621.0 634.7,621.0 636.8,552.3 637.8,577.8 639.0,542.2 641.1,564.9 642.6,549.1 644.3,583.6 646.4,551.0 647.9,582.7 649.1,502.1 650.2,513.1 651.3,497.9 652.4,519.1 654.6,499.3 655.7,505.7 656.7,478.9 658.6,509.5 659.9,497.5 661.7,511.6 663.7,438.0 665.5,512.7 667.3,452.3 668.6,510.2 670.8,476.3 671.8,515.5 673.6,477.9 675.0,512.0 676.8,486.7 678.4,492.7 679.5,464.0 681.0,502.8 682.8,486.5 684.3,495.9 686.1,464.1 687.5,504.8 689.5,491.8 691.1,506.6 692.5,501.8 694.3,500.1 696.3,398.0 698.5,496.7 700.5,460.1 702.0,506.4 704.1,454.0 705.8,497.3 707.9,470.6 708.9,501.5 710.2,450.9 712.2,503.2 714.2,489.3 716.2,504.6 718.3,454.5 720.3,506.4 722.2,451.5 723.7,479.2 724.8,440.9 726.0,502.5 727.9,398.0 729.6,507.1 731.4,454.9 732.7,509.6 734.6,467.8 735.8,494.8 737.7,465.4 739.4,500.5 741.5,476.3 743.1,499.2 744.8,467.6 746.0,502.4 747.8,453.4 749.3,430.0 750.9,467.0 753.1,508.2 754.6,479.4 756.5,498.2 757.7,455.0 759.3,503.7 760.4,503.9 762.4,502.0 764.0,455.9 765.9,507.0 767.4,486.2 769.4,503.2 771.6,465.4 772.8,507.7 774.0,469.2 775.7,509.5 777.7,435.6 779.8,502.3 780.9,455.3 782.1,503.1 784.2,465.2 786.0,492.3 788.1,460.0 789.7,498.6 790.8,504.7 792.1,501.9 793.2,465.9 795.2,497.9 797.3,468.5 799.3,508.0 801.1,444.5 802.2,477.0 803.4,467.7 805.2,476.3 806.5,449.1 807.7,498.2 809.1,466.7 810.6,505.0 811.8,478.9 813.6,506.0 814.7,478.4 815.7,505.0 817.8,483.5 819.9,487.3 821.9,485.9 823.0,502.9 825.2,486.5 826.7,499.3 828.1,484.1 829.9,501.0 831.0,480.1 832.9,508.4 834.6,490.8 835.9,494.8 837.4,483.6 839.4,504.9 840.8,484.8 842.2,445.0 844.2,498.4 845.3,492.3 847.4,476.6 849.0,505.5 850.3,479.3 851.7,504.8 853.9,500.1 855.0,511.7 856.4,482.1 858.3,509.7 859.6,481.2 861.6,511.7 863.0,480.0 865.0,511.5 866.6,483.4 868.7,501.4 870.0,475.2 871.2,509.4 873.1,478.2 874.2,505.1 875.3,471.4 876.6,504.0 877.9,468.9 879.9,501.0 881.6,480.6 883.4,508.2 884.9,479.1 886.9,508.4 888.3,489.4 889.9,493.9 890.9,488.3 893.0,505.4 894.3,486.2 895.7,493.2 896.9,471.3 897.9,501.5 899.6,469.4 900.7,507.7 902.6,486.9 903.9,492.2 905.8,468.6 906.9,499.8 908.9,489.7 910.5,508.4" fill="none" stroke="#10f040" stroke-width="1" stroke-linejoin="round" shape-rendering="crispEdges"/>
<polyline points="151.0,560.0 151.0,564.6 152.0,564.6 152.0,561.7 153.0,561.7 153.0,561.9 154.0,561.9 154.0,552.4 157.0,552.4 157.0,621.0 158.0,621.0 158.0,621.0 160.0,621.0 160.0,621.0 161.0,621.0 161.0,621.0 163.0,621.0 163.0,621.0 166.0,621.0 166.0,572.4 169.0,572.4 169.0,568.3 170.0,568.3 170.0,573.0 171.0,573.0 171.0,569.3 173.0,569.3 173.0,563.4 174.0,563.4 174.0,567.8 175.0,567.8 175.0,558.9 178.0,558.9 178.0,567.8 179.0,567.8 179.0,586.4 181.0,586.4 181.0,621.0 183.0,621.0 183.0,621.0 185.0,621.0 185.0,573.1 186.0,573.1 186.0,581.9 187.0,581.9 187.0,584.2 189.0,584.2 189.0,583.3 191.0,583.3 191.0,584.2 193.0,584.2 193.0,560.9 195.0,560.9 195.0,564.7 198.0,564.7 198.0,560.8 199.0,560.8 199.0,558.9 201.0,558.9 201.0,569.6 203.0,569.6 203.0,591.1 205.0,591.1 205.0,579.5 206.0,579.5 206.0,558.4 208.0,558.4 208.0,590.0 211.0,590.0 211.0,577.0 213.0,577.0 213.0,569.3 214.0,569.3 214.0,573.5 216.0,573.5 216.0,562.3 217.0,562.3 217.0,562.7 219.0,562.7 219.0,576.8 221.0,576.8 221.0,621.0 223.0,621.0 223.0,621.0 224.0,621.0 224.0,621.0 226.0,621.0 226.0,621.0 227.0,621.0 227.0,621.0 229.0,621.0 229.0,621.0 230.0,621.0 230.0,621.0 232.0,621.0 232.0,621.0 234.0,621.0 234.0,600.1 237.0,600.1 237.0,559.3 239.0,559.3 239.0,579.5 242.0,579.5 242.0,621.0 244.0,621.0 244.0,621.0 245.0,621.0 245.0,621.0 247.0,621.0 247.0,581.6 249.0,581.6 249.0,561.3 251.0,561.3 251.0,546.8 252.0,546.8 252.0,568.7 254.0,568.7 254.0,561.6 255.0,561.6 255.0,572.4 257.0,572.4 257.0,564.1 258.0,564.1 258.0,553.4 259.0,553.4 259.0,565.2 261.0,565.2 261.0,561.7 263.0,561.7 263.0,576.6 264.0,576.6 264.0,559.9 267.0,559.9 267.0,564.4 269.0,564.4 269.0,564.4 270.0,564.4 270.0,561.5 272.0,561.5 272.0,533.9 274.0,533.9 274.0,542.7 277.0,542.7 277.0,559.4 278.0,559.4 278.0,528.2 280.0,528.2 280.0,533.8 282.0,533.8 282.0,535.2 284.0,535.2 284.0,572.8 286.0,572.8 286.0,571.4 288.0,571.4 288.0,567.9 290.0,567.9 290.0,553.7 293.0,553.7 293.0,542.5 295.0,542.5 295.0,545.3 297.0,545.3 297.0,543.1 299.0,543.1 299.0,543.8 301.0,543.8 301.0,541.3 302.0,541.3 302.0,557.9 304.0,557.9 304.0,570.5 305.0,570.5 305.0,526.0 307.0,526.0 307.0,538.9 309.0,538.9 309.0,551.0 311.0,551.0 311.0,565.7 313.0,565.7 313.0,542.4 315.0,542.4 315.0,557.1 316.0,557.1 316.0,556.9 317.0,556.9 317.0,542.7 320.0,542.7 320.0,550.0 321.0,550.0 321.0,571.0 323.0,571.0 323.0,560.3 325.0,560.3 325.0,537.6 326.0,537.6 326.0,528.4 327.0,528.4 327.0,562.6 328.0,562.6 328.0,558.0 330.0,558.0 330.0,561.7 332.0,561.7 332.0,551.4 334.0,551.4 334.0,528.7 336.0,528.7 336.0,527.0 338.0,527.0 338.0,522.6 341.0,522.6 341.0,536.3 343.0,536.3 343.0,526.4 346.0,526.4 346.0,539.1 348.0,539.1 348.0,537.5 349.0,537.5 349.0,543.7 351.0,543.7 351.0,554.9 354.0,554.9 354.0,561.2 355.0,561.2 355.0,544.4 356.0,544.4 356.0,522.0 358.0,522.0 358.0,521.0 359.0,521.0 359.0,563.5 361.0,563.5 361.0,546.0 362.0,546.0 362.0,547.9 364.0,547.9 364.0,530.9 366.0,530.9 366.0,529.7 369.0,529.7 369.0,519.4 371.0,519.4 371.0,518.5 373.0,518.5 373.0,526.1 375.0,526.1 375.0,543.6 377.0,543.6 377.0,530.3 378.0,530.3 378.0,516.5 379.0,516.5 379.0,530.0 381.0,530.0 381.0,529.3 383.0,529.3 383.0,546.0 386.0,546.0 386.0,533.4 387.0,533.4 387.0,534.5 390.0,534.5 390.0,537.8 391.0,537.8 391.0,528.1 393.0,528.1 393.0,523.2 395.0,523.2 395.0,533.3 397.0,533.3 397.0,539.8 399.0,539.8 399.0,545.3 401.0,545.3 401.0,553.5 402.0,553.5 402.0,532.6 404.0,532.6 404.0,528.9 407.0,528.9 407.0,515.2 408.0,515.2 408.0,531.3 410.0,531.3 410.0,539.6 412.0,539.6 412.0,534.7 413.0,534.7 413.0,521.4 416.0,521.4 416.0,532.8 418.0,532.8 418.0,523.6 420.0,523.6 420.0,523.3 423.0,523.3 423.0,519.9 425.0,519.9 425.0,541.0 427.0,541.0 427.0,538.1 429.0,538.1 429.0,523.5 430.0,523.5 430.0,533.9 432.0,533.9 432.0,546.8 433.0,546.8 433.0,543.3 435.0,543.3 435.0,514.5 438.0,514.5 438.0,521.6 440.0,521.6 440.0,522.1 441.0,522.1 441.0,538.5 443.0,538.5 443.0,542.7 446.0,542.7 446.0,535.0 447.0,535.0 447.0,549.2 449.0,549.2 449.0,531.1 452.0,531.1 452.0,551.6 453.0,551.6 453.0,552.7 455.0,552.7 455.0,542.7 457.0,542.7 457.0,547.2 460.0,547.2 460.0,545.2 462.0,545.2 462.0,621.0 464.0,621.0 464.0,621.0 467.0,621.0 467.0,621.0 468.0,621.0 468.0,572.2 470.0,572.2 470.0,557.9 471.0,557.9 471.0,621.0 473.0,621.0 473.0,621.0 474.0,621.0 474.0,621.0 476.0,621.0 476.0,621.0 477.0,621.0 477.0,546.0 478.0,546.0 478.0,544.5 480.0,544.5 480.0,565.8 482.0,565.8 482.0,621.0 483.0,621.0 483.0,621.0 485.0,621.0 485.0,621.0 487.0,621.0 487.0,621.0 490.0,621.0 490.0,621.0 492.0,621.0 492.0,621.0 494.0,621.0 494.0,621.0 496.0,621.0 496.0,621.0 499.0,621.0 499.0,564.0 500.0,564.0 500.0,529.1 503.0,529.1 503.0,534.3 505.0,534.3 505.0,546.6 506.0,546.6 506.0,555.1 508.0,555.1 508.0,534.1 511.0,534.1 511.0,578.0 514.0,578.0 514.0,545.0 515.0,545.0 515.0,621.0 517.0,621.0 517.0,621.0 519.0,621.0 519.0,525.0 521.0,525.0 521.0,547.6 523.0,547.6 523.0,566.7 526.0,566.7 526.0,559.2 529.0,559.2 529.0,563.9 531.0,563.9 531.0,573.7 533.0,573.7 533.0,570.8 536.0,570.8 536.0,572.2 537.0,572.2 537.0,529.8 540.0,529.8 540.0,520.1 541.0,520.1 541.0,506.1 542.0,506.1 542.0,508.2 543.0,508.2 543.0,539.0 545.0,539.0 545.0,524.8 547.0,524.8 547.0,532.2 550.0,532.2 550.0,525.2 553.0,525.2 553.0,504.8 555.0,504.8 555.0,520.5 557.0,520.5 557.0,532.6 560.0,532.6 560.0,505.8 562.0,505.8 562.0,527.7 564.0,527.7 564.0,496.7 565.0,496.7 565.0,498.2 566.0,498.2 566.0,503.1 567.0,503.1 567.0,506.4 569.0,506.4 569.0,513.0 570.0,513.0 570.0,499.0 572.0,499.0 572.0,501.5 575.0,501.5 575.0,517.3 577.0,517.3 577.0,559.1 579.0,559.1 579.0,517.4 580.0,517.4 580.0,538.7 583.0,538.7 583.0,539.1 584.0,539.1 584.0,501.4 585.0,501.4 585.0,547.7 587.0,547.7 587.0,520.8 589.0,520.8 589.0,552.7 590.0,552.7 590.0,503.1 592.0,503.1 592.0,546.0 593.0,546.0 593.0,539.7 594.0,539.7 594.0,521.1 596.0,521.1 596.0,536.9 597.0,536.9 597.0,499.2 600.0,499.2 600.0,621.0 603.0,621.0 603.0,621.0 605.0,621.0 605.0,621.0 606.0,621.0 606.0,596.5 608.0,596.5 608.0,578.1 610.0,578.1 610.0,572.8 613.0,572.8 613.0,621.0 614.0,621.0 614.0,621.0 615.0,621.0 615.0,621.0 616.0,621.0 616.0,559.1 617.0,559.1 617.0,621.0 618.0,621.0 618.0,621.0 620.0,621.0 620.0,591.0 622.0,591.0 622.0,530.9 624.0,530.9 624.0,621.0 626.0,621.0 626.0,621.0 627.0,621.0 627.0,621.0 629.0,621.0 629.0,621.0 630.0,621.0 630.0,621.0 633.0,621.0 633.0,531.8 635.0,531.8 635.0,531.8 636.0,531.8 636.0,559.6 638.0,559.6 638.0,527.2 641.0,527.2 641.0,537.0 642.0,537.0 642.0,557.2 644.0,557.2 644.0,582.7 645.0,582.7 645.0,580.6 647.0,580.6 647.0,506.3 650.0,506.3 650.0,544.3 652.0,544.3 652.0,534.6 654.0,534.6 654.0,527.1 656.0,527.1 656.0,558.0 659.0,558.0 659.0,523.4 662.0,523.4 662.0,546.0 663.0,546.0 663.0,539.2 665.0,539.2 665.0,561.5 666.0,561.5 666.0,530.6 667.0,530.6 667.0,503.1 668.0,503.1 668.0,515.9 670.0,515.9 670.0,526.1 673.0,526.1 673.0,503.6 675.0,503.6 675.0,519.6 678.0,519.6 678.0,491.4 680.0,491.4 680.0,526.9 683.0,526.9 683.0,487.1 685.0,487.1 685.0,524.2 686.0,524.2 686.0,530.0 688.0,530.0 688.0,488.2 690.0,488.2 690.0,522.4 691.0,522.4 691.0,523.6 692.0,523.6 692.0,508.5 694.0,508.5 694.0,497.3 695.0,497.3 695.0,533.2 697.0,533.2 697.0,501.5 699.0,501.5 699.0,524.8 700.0,524.8 700.0,521.1 702.0,521.1 702.0,490.1 704.0,490.1 704.0,538.5 705.0,538.5 705.0,539.1 707.0,539.1 707.0,515.3 709.0,515.3 709.0,523.0 711.0,523.0 711.0,502.1 713.0,502.1 713.0,518.9 716.0,518.9 716.0,492.4 719.0,492.4 719.0,507.0 721.0,507.0 721.0,506.0 723.0,506.0 723.0,481.3 724.0,481.3 724.0,484.3 727.0,484.3 727.0,523.3 729.0,523.3 729.0,538.7 732.0,538.7 732.0,534.4 734.0,534.4 734.0,474.4 735.0,474.4 735.0,509.7 736.0,509.7 736.0,521.4 737.0,521.4 737.0,519.7 739.0,519.7 739.0,502.7 740.0,502.7 740.0,525.1 741.0,525.1 741.0,538.5 742.0,538.5 742.0,500.4 744.0,500.4 744.0,540.0 745.0,540.0 745.0,489.4 748.0,489.4 748.0,508.4 750.0,508.4 750.0,543.2 752.0,543.2 752.0,516.7 753.0,516.7 753.0,492.3 755.0,492.3 755.0,484.8 758.0,484.8 758.0,484.7 759.0,484.7 759.0,497.8 761.0,497.8 761.0,516.4 762.0,516.4 762.0,531.8 764.0,531.8 764.0,536.2 765.0,536.2 765.0,531.2 768.0,531.2 768.0,481.6 769.0,481.6 769.0,538.5 772.0,538.5 772.0,479.8 774.0,479.8 774.0,528.7 777.0,528.7 777.0,492.6 780.0,492.6 780.0,498.5 782.0,498.5 782.0,523.8 784.0,523.8 784.0,511.6 785.0,511.6 785.0,529.5 786.0,529.5 786.0,475.4 788.0,475.4 788.0,504.4 790.0,504.4 790.0,542.6 791.0,542.6 791.0,496.9 794.0,496.9 794.0,516.6 796.0,516.6 796.0,498.6 797.0,498.6 797.0,517.6 799.0,517.6 799.0,546.7 802.0,546.7 802.0,506.3 803.0,506.3 803.0,536.0 804.0,536.0 804.0,515.7 805.0,515.7 805.0,530.2 806.0,530.2 806.0,528.2 808.0,528.2 808.0,507.8 810.0,507.8 810.0,537.8 811.0,537.8 811.0,517.8 812.0,517.8 812.0,520.9 814.0,520.9 814.0,514.7 815.0,514.7 815.0,504.2 816.0,504.2 816.0,526.4 817.0,526.4 817.0,507.3 818.0,507.3 818.0,526.9 821.0,526.9 821.0,531.5 823.0,531.5 823.0,533.6 825.0,533.6 825.0,508.1 827.0,508.1 827.0,512.0 828.0,512.0 828.0,489.5 831.0,489.5 831.0,518.4 833.0,518.4 833.0,530.6 834.0,530.6 834.0,512.1 835.0,512.1 835.0,519.8 837.0,519.8 837.0,536.8 839.0,536.8 839.0,528.8 840.0,528.8 840.0,527.4 842.0,527.4 842.0,501.8 845.0,501.8 845.0,509.2 848.0,509.2 848.0,506.6 851.0,506.6 851.0,510.9 853.0,510.9 853.0,515.3 855.0,515.3 855.0,488.5 858.0,488.5 858.0,536.6 859.0,536.6 859.0,542.0 860.0,542.0 860.0,544.2 861.0,544.2 861.0,491.6 863.0,491.6 863.0,513.1 865.0,513.1 865.0,511.5 866.0,511.5 866.0,540.3 867.0,540.3 867.0,519.7 870.0,519.7 870.0,502.6 872.0,502.6 872.0,500.8 874.0,500.8 874.0,515.6 875.0,515.6 875.0,494.5 876.0,494.5 876.0,536.4 879.0,536.4 879.0,538.1 881.0,538.1 881.0,510.6 883.0,510.6 883.0,544.7 884.0,544.7 884.0,517.3 887.0,517.3 887.0,515.6 888.0,515.6 888.0,507.6 890.0,507.6 890.0,505.9 891.0,505.9 891.0,546.9 893.0,546.9 893.0,539.8 895.0,539.8 895.0,542.5 897.0,542.5 897.0,505.0 899.0,505.0 899.0,522.6 901.0,522.6 901.0,531.0 903.0,531.0 903.0,519.9 904.0,519.9 904.0,546.4 905.0,546.4 905.0,544.5 906.0,544.5 906.0,536.5 908.0,536.5 908.0,545.6 909.0,545.6 909.0,553.6 911.0,553.6 911.0,527.8" fill="none" stroke="#008000" stroke-width="3" stroke-linejoin="round" shape-rendering="crispEdges"/>
<rect x="151" y="620.5" width="760" height="2" fill="#0000ff"/>
<path d="M343,622 L343,619 L345,618 L347,618 L349,619 L351,618 L353,620 L355,618 L357,620 L359,619 L361,619 L363,619 L365,619 L367,619 L369,619 L371,616 L373,613 L375,616 L377,619 L379,619 L381,620 L383,619 L385,619 L387,619 L389,618 L391,619 L393,618 L395,619 L397,619 L399,619 L401,619 L403,619 L405,620 L407,618 L409,619 L411,620 L413,619 L415,619 L417,619 L419,620 L421,619 L423,619 L425,620 L427,620 L429,619 L431,614 L433,612 L435,614 L437,618 L439,620 L441,620 L443,619 L445,620 L447,618 L449,617 L451,620 L453,620 L455,618 L457,620 L459,618 L461,618 L463,620 L465,618 L467,617 L469,616 L471,615 L473,616 L475,614 L477,615 L479,617 L481,619 L483,620 L485,618 L487,619 L489,619 L491,619 L493,619 L495,619 L497,619 L499,618 L501,620 L503,618 L505,620 L507,618 L509,619 L511,618 L513,618 L515,620 L517,618 L519,619 L521,618 L523,620 L525,619 L527,618 L529,620 L530,622 Z" fill="#0000ff"/>
<path d="M697,622 L699,618 L701,614 L703,618 L706,622 Z" fill="#0000ff"/>
<path d="M297,622 L299.5,619 L302,622 Z" fill="#0000ff"/>
<path d="M315,622 L317.5,619 L320,622 Z" fill="#0000ff"/>
<path d="M539,622 L541.5,619 L544,622 Z" fill="#0000ff"/>
<path d="M713,622 L715.5,619 L718,622 Z" fill="#0000ff"/>
<path d="M737,622 L739.5,619 L742,622 Z" fill="#0000ff"/>
<path d="M758,622 L760.5,619 L763,622 Z" fill="#0000ff"/>
<path d="M768,622 L770.5,619 L773,622 Z" fill="#0000ff"/>
<path d="M808,622 L810.5,619 L813,622 Z" fill="#0000ff"/>
<polyline points="151.0,369.0 153.5,370.4 156.0,371.7 157.8,372.7 160.7,399.3 162.9,372.6 164.7,406.1 166.9,411.9 168.8,397.1 171.0,410.9 173.8,401.2 175.9,406.4 177.6,391.6 179.2,398.3 181.5,355.2 183.6,355.0 185.8,391.6 188.4,394.1 190.5,355.6 192.5,355.5 194.1,389.2 195.6,392.6 197.6,389.4 200.3,391.3 203.1,385.4 205.8,395.5 207.4,359.9 209.9,360.0 212.4,388.9 214.5,360.8 216.3,399.7 218.3,362.1 219.9,362.2 222.2,362.0 225.1,361.7 226.6,361.5 228.8,361.3 231.6,360.1 233.8,358.7 235.9,390.4 238.7,371.4 240.8,349.9 243.1,347.4 244.8,364.4 247.5,343.6 250.1,371.9 252.7,357.2 254.2,374.4 256.6,363.4 259.4,362.7 261.7,342.7 263.6,348.1 265.5,377.3 267.8,351.6 269.7,377.1 272.5,348.5 274.1,370.3 276.3,353.3 278.3,375.3 281.2,354.8 283.2,369.9 285.5,350.5 288.2,365.2 290.9,355.7 293.8,367.9 295.4,367.6 297.0,360.7 299.4,363.1 301.7,373.8 304.2,357.5 306.0,374.1 308.9,349.8 310.6,372.9 312.7,370.8 315.5,357.9 317.1,371.1 319.9,351.9 322.3,365.0 324.0,361.5 326.7,362.4 329.7,353.9 331.8,369.5 334.1,349.8 336.7,366.3 338.4,360.4 341.3,373.9 343.5,364.1 346.2,355.6 347.8,355.4 350.2,356.0 351.9,363.4 354.7,362.7 356.2,367.6 358.2,372.1 359.8,352.9 361.7,369.2 364.4,352.2 366.7,360.3 369.4,356.0 370.9,365.6 373.4,349.7 375.4,363.6 377.2,350.1 379.2,358.8 381.4,349.6 384.2,359.7 386.5,349.1 388.3,365.0 390.3,350.0 392.1,359.5 394.9,353.7 396.5,359.3 399.2,364.8 401.0,356.6 402.9,357.7 405.2,349.9 406.8,352.9 409.2,364.8 410.8,347.2 413.8,353.7 416.3,352.1 419.0,356.8 420.5,362.1 422.6,340.8 425.2,357.0 427.3,339.7 429.1,351.3 432.1,355.6 434.3,344.7 437.0,342.0 439.4,353.4 441.0,341.4 442.8,353.4 445.4,332.8 448.3,350.5 451.0,338.5 453.2,347.5 456.0,330.7 458.3,337.4 461.3,343.8 464.0,296.1 466.2,290.0 469.1,307.6 471.1,287.0 473.7,314.1 475.8,313.0 478.5,300.0 481.3,332.2 483.5,287.6 486.2,279.8 488.7,278.5 490.7,277.4 492.7,276.2 495.1,274.9 496.7,293.5 498.9,309.4 500.6,297.9 503.3,301.3 506.3,291.6 509.1,305.3 511.2,302.6 513.4,258.0 516.2,270.4 517.7,260.0 519.9,286.1 521.9,262.5 524.7,279.4 527.6,272.0 529.2,278.9 532.1,263.1 534.6,271.7 537.1,265.3 539.1,272.1 541.9,259.0 544.1,267.1 546.7,266.2 548.7,250.6 551.5,249.4 553.9,256.1 556.5,252.7 559.1,256.2 561.3,252.9 564.0,256.5 566.9,244.9 568.8,246.3 571.6,241.7 573.3,246.7 575.0,248.0 577.0,227.7 579.1,247.5 580.8,237.7 582.6,236.3 584.3,223.5 586.4,241.5 588.2,228.5 590.9,233.4 592.9,214.0 595.1,228.3 597.7,173.0 600.6,195.3 603.1,169.5 605.7,168.6 608.5,169.1 610.5,169.5 612.4,169.9 614.0,170.2 616.6,170.7 618.7,171.1 620.4,171.4 622.9,188.8 625.4,203.5 628.3,197.6 630.4,178.0 632.2,207.5 634.5,222.2 636.2,182.0 638.3,213.8 640.8,220.1 643.2,231.7 645.8,227.2 648.3,239.1 651.2,228.1 653.9,236.3 655.6,236.7 658.0,219.8 660.4,237.2 662.3,219.9 664.8,237.8 666.8,226.6 669.6,232.3 672.0,224.2 673.6,234.9 676.3,226.4 678.0,236.6 680.0,232.2 681.8,245.8 684.6,240.9 686.1,250.3 688.4,240.6 690.8,254.9 692.9,245.7 694.8,260.7 697.5,264.8 700.5,247.2 702.2,263.7 704.7,255.8 706.5,267.6 708.3,262.9 710.5,268.8 712.2,260.0 714.8,284.4 717.7,274.6 720.3,276.6 721.8,277.8 724.3,283.7 726.0,278.1 728.0,270.2 730.0,300.2 732.2,274.3 733.9,300.2 736.9,290.0 739.1,302.6 740.8,286.0 742.6,294.8 745.5,290.4 748.4,287.6 750.5,306.2 752.2,283.3 754.6,301.1 757.3,295.2 758.9,308.4 760.5,288.7 763.3,302.6 765.1,287.6 767.2,285.6 768.9,298.5 771.3,293.2 773.4,296.7 775.0,290.9 777.5,305.7 780.0,294.0 781.7,308.4 783.3,287.7 785.2,289.8 787.9,304.5 789.4,285.8 792.1,285.0 794.0,308.5 796.5,297.3 799.4,299.3 800.9,294.9 803.9,305.4 806.6,286.9 808.3,306.4 811.1,295.8 813.5,306.8 815.9,292.8 817.5,296.5 819.4,290.2 822.1,296.1 824.8,291.0 827.3,298.5 828.9,297.9 830.9,297.0 833.7,296.2 835.8,299.8 837.5,293.0 840.1,285.2 841.8,304.8 844.1,291.1 846.5,304.2 849.1,306.1 851.9,305.1 854.4,296.2 857.2,298.1 859.4,304.9 861.3,289.9 863.0,301.5 865.4,307.7 868.2,298.1 870.1,299.0 871.6,288.5 874.5,289.7 877.2,307.0 879.5,287.0 881.5,303.7 883.8,297.7 886.1,303.9 889.0,290.8 891.5,297.7 893.3,299.4 894.8,299.1 897.8,288.1 900.4,304.3 903.0,289.0 904.5,304.3 906.4,300.6 908.8,311.2" fill="none" stroke="#ff8040" stroke-width="1" stroke-linejoin="round" shape-rendering="crispEdges"/>
<polyline points="151.0,500.0 172.5,500.0 178.3,508.8 184.0,510.8 205.7,510.7 209.6,518.6 219.4,521.5 225.2,531.3 242.8,534.2 248.7,542.0 266.2,544.9 272.1,552.7 278.0,555.7 299.4,557.0 305.3,565.4 322.9,568.0 330.7,578.1 354.7,578.1 359.6,587.9 366.4,589.8 393.7,590.2 397.6,597.7 405.5,601.2 449.4,601.2 454.3,610.4 460.1,612.9 518.7,613.3 524.6,607.4 528.5,604.5 536.3,612.3 542.7,606.4 550.5,602.5 600.3,602.5 609.1,592.8 615.0,591.4 647.2,591.4 652.1,583.0 659.9,580.5 679.4,579.1 687.3,570.3 693.1,568.8 702.9,568.4 708.7,559.6 714.6,558.2 734.7,557.6 740.5,548.8 746.4,546.5 781.5,545.9 787.4,538.1 795.2,535.2 838.2,534.8 844.0,526.4 849.9,523.8 896.8,523.4 909.5,522.5 910.5,520.5" fill="none" stroke="#000000" stroke-width="2" stroke-linejoin="round" shape-rendering="crispEdges"/>
<polyline points="151.0,621.5 299.0,621.5 301.0,619.0 305.0,618.0 316.0,617.0 318.0,615.0 330.0,614.0 334.0,609.0 337.0,607.0 341.0,605.0 346.0,603.5 351.0,599.0 360.5,584.0 368.3,568.4 374.2,552.7 380.1,535.2 391.8,517.6 403.5,500.0 411.0,482.4 419.3,465.9 423.4,451.5 429.6,439.1 433.7,416.5 437.8,402.0 448.1,381.8 460.5,355.0 468.7,334.4 474.9,309.7 479.0,287.1 485.2,268.5 492.4,252.0 498.6,236.5 508.9,222.0 521.3,214.9 529.5,210.5 697.0,210.0 700.0,199.4 704.0,184.0 710.0,181.9 716.0,181.0 735.0,181.0 737.0,179.0 758.0,179.0 760.0,176.5 772.0,176.5 774.0,174.5 808.0,174.5 810.0,172.5 911.0,172.5" fill="none" stroke="#0000ff" stroke-width="2" stroke-linejoin="round" shape-rendering="crispEdges"/>
<polyline points="151.0,72.5 663.0,72.5 667.3,78.6 675.2,83.4 679.0,87.3 686.9,93.6 696.6,100.0 704.5,105.9 711.3,106.5 718.1,102.0 729.8,100.6 741.6,95.7 751.3,95.7 757.2,90.9 776.7,89.7 783.6,85.0 794.3,83.8 903.0,83.8 906.0,86.5 909.0,85.0 911.0,84.0" fill="none" stroke="#808080" stroke-width="2" stroke-linejoin="round" shape-rendering="crispEdges"/>
<polyline points="151.0,375.2 163.4,379.8 181.9,363.3 192.2,362.3 208.7,366.4 229.3,368.4 243.7,357.1 258.1,342.7 274.6,331.4 295.2,326.2 315.8,322.1 341.0,317.0 371.9,314.9 402.8,306.6 433.7,300.5 464.6,296.3 485.2,288.1 505.8,278.8 515.0,267.4 526.4,256.2 531.0,246.8 551.6,228.3 572.2,211.8 592.8,197.4 609.3,177.8 621.6,178.8 634.0,187.1 654.6,195.3 675.2,213.9 695.8,232.4 716.4,248.9 721.0,252.5 741.6,259.7 776.6,263.9 811.6,259.7 844.6,266.9 869.3,264.9 894.0,265.9 910.5,280.3" fill="none" stroke="#00ffff" stroke-width="1" stroke-linejoin="round" shape-rendering="crispEdges"/>
<polyline points="151.0,391.0 161.3,393.1 175.7,381.8 192.2,379.8 204.6,378.7 223.0,379.8 229.3,375.6 237.5,357.1 249.9,338.6 262.2,326.2 274.6,315.9 295.2,310.8 315.8,307.7 336.4,303.6 361.6,299.4 382.2,298.4 402.8,293.3 423.4,287.7 444.0,285.0 464.6,281.9 485.2,271.6 501.7,258.2 509.9,251.0 515.0,242.7 525.4,234.4 531.0,222.1 537.2,211.8 543.4,210.8 553.7,219.0 564.0,204.6 569.1,197.4 574.3,200.5 582.5,190.2 590.7,189.1 594.9,170.6 603.1,167.5 609.3,170.6 621.6,171.6 631.9,184.0 640.2,193.3 654.6,195.3 666.9,205.6 675.2,216.9 685.5,220.0 695.8,219.0 702.0,222.1 716.4,232.4 721.0,238.1 839.4,238.1 840.5,263.9 844.6,265.9 852.8,259.7 865.2,260.8 877.5,256.6 892.0,257.7 902.3,282.4 910.5,294.7" fill="none" stroke="#800000" stroke-width="2" stroke-linejoin="round" shape-rendering="crispEdges"/>
<polyline points="151.0,369.0 161.3,374.6 171.6,362.3 177.8,355.5 184.0,355.0 186.0,357.0 192.2,355.0 195.3,359.2 212.8,360.2 219.0,362.3 229.3,361.2 233.4,359.2 241.6,348.9 249.9,340.6 262.2,330.3 274.6,322.1 295.2,318.0 315.8,313.9 336.4,310.8 361.6,307.7 382.2,303.6 402.8,294.3 427.5,292.2 450.2,290.2 474.9,286.0 495.5,274.7 509.9,262.4 522.3,251.0 531.0,236.5 547.5,221.1 561.9,211.8 576.3,202.5 592.8,189.1 601.0,170.6 605.1,168.5 621.6,171.6 634.0,183.0 646.3,189.1 658.7,192.2 666.9,196.3 681.4,208.7 695.8,210.8 706.1,218.0 716.4,228.3 721.0,230.9 733.4,238.1 749.8,241.2 772.5,247.8 793.1,249.4 807.5,245.3 836.3,251.5 840.5,254.6 854.9,254.0 869.3,250.5 896.1,252.5 910.5,270.0" fill="none" stroke="#ff0000" stroke-width="2" stroke-linejoin="round" shape-rendering="crispEdges"/>
<path d="M151,622 L151,62.5 L911,62.5 L911,622" fill="none" stroke="#808080" stroke-width="2"/>
<line x1="151" y1="622.5" x2="911" y2="622.5" stroke="#808080" stroke-width="1" />
<line x1="152" y1="398.5" x2="911" y2="398.5" stroke="#ff0000" stroke-width="2" />
<text x="11" y="652" fill="#000" text-anchor="start" font-size="11" font-weight="normal" >09:27</text>
<path d="M40,651 L40,648 Q41,645 44.5,645 Q48,645 49,648 L49,651 Z" fill="#ffff00"/>
<text x="345" y="652" fill="#000" text-anchor="start" font-size="11" font-weight="normal" >07:10</text>
<circle cx="379" cy="647.5" r="3.6" fill="#ffff00"/>
<path d="M379,642v2M379,651v2M373.5,647.5h2M382.5,647.5h2M375,643.5l1.5,1.5M383,643.5l-1.5,1.5M375,651.5l1.5,-1.5M383,651.5l-1.5,-1.5" stroke="#ffff80" stroke-width="1"/>
<rect x="377" y="622" width="2" height="8" fill="#ffff00"/>
<rect x="449" y="622" width="2" height="8" fill="#808080"/>
<rect x="445" y="642" width="11" height="11" fill="#000080"/>
<path d="M447.5,644h2v3h1.5l-2.5,3.5l-2.5,-3.5h1.5z" fill="#ffff00"/>
<circle cx="454" cy="652" r="2.2" fill="#ffffff"/>
<text x="456" y="652" fill="#000" text-anchor="start" font-size="11" font-weight="normal" >09:27</text>
<text x="645" y="652" fill="#000" text-anchor="start" font-size="11" font-weight="normal" >16:37</text>
<rect x="675.5" y="645.5" width="5" height="5" fill="none" stroke="#ffff00" stroke-width="1"/>
<rect x="677" y="622" width="2" height="8" fill="#ffff00"/>
<rect x="694" y="622" width="2" height="8" fill="#808080"/>
<rect x="690" y="642" width="11" height="11" fill="#000080"/>
<circle cx="693" cy="645" r="2.5" fill="#ffffff"/>
<path d="M697,644l2.5,3.5h-1.5v4h-2v-4h-1.5z" fill="#ffff00"/>
<text x="701" y="652" fill="#000" text-anchor="start" font-size="11" font-weight="normal" >17:11</text>
<rect x="0" y="654" width="1024" height="74" fill="#f4ead8"/>
<rect x="1" y="655" width="1022" height="73" fill="#0070d8"/>
<rect x="87" y="655" width="1" height="73" fill="#f4ead8"/>
<rect x="88" y="655" width="1" height="73" fill="#a08050"/>
<rect x="204" y="655" width="1" height="73" fill="#f4ead8"/>
<rect x="205" y="655" width="1" height="73" fill="#a08050"/>
<rect x="322" y="655" width="1" height="73" fill="#f4ead8"/>
<rect x="323" y="655" width="1" height="73" fill="#a08050"/>
<rect x="440" y="655" width="1" height="73" fill="#f4ead8"/>
<rect x="441" y="655" width="1" height="73" fill="#a08050"/>
<rect x="559" y="655" width="1" height="73" fill="#f4ead8"/>
<rect x="560" y="655" width="1" height="73" fill="#a08050"/>
<rect x="677" y="655" width="1" height="73" fill="#f4ead8"/>
<rect x="678" y="655" width="1" height="73" fill="#a08050"/>
<rect x="795" y="655" width="1" height="73" fill="#f4ead8"/>
<rect x="796" y="655" width="1" height="73" fill="#a08050"/>
<rect x="912" y="655" width="1" height="73" fill="#f4ead8"/>
<rect x="913" y="655" width="1" height="73" fill="#a08050"/>
<rect x="1023" y="655" width="1" height="73" fill="#f4ead8"/>
<rect x="1024" y="655" width="1" height="73" fill="#a08050"/>
<text x="9" y="673" fill="#000" text-anchor="start" font-size="11" font-weight="bold" letter-spacing="0.35">Sensor</text>
<text x="9" y="689" fill="#000" text-anchor="start" font-size="11" font-weight="bold" letter-spacing="0.35">MinWert</text>
<text x="9" y="705" fill="#000" text-anchor="start" font-size="11" font-weight="bold" letter-spacing="0.35">MaxWert</text>
<text x="9" y="721" fill="#000" text-anchor="start" font-size="11" font-weight="bold" letter-spacing="0.35">Durchschnitt</text>
<text x="95.5" y="673" fill="#000" text-anchor="start" font-size="11" font-weight="bold" letter-spacing="0.35">Temp. 2 m</text>
<text x="198.5" y="673" fill="#000" text-anchor="end" font-size="11" font-weight="bold" letter-spacing="0.35">°C</text>
<text x="101.5" y="689" fill="#000" text-anchor="start" font-size="11" font-weight="normal" >00:20</text>
<text x="198.5" y="689" fill="#000" text-anchor="end" font-size="11" font-weight="normal" >1.0</text>
<text x="101.5" y="705" fill="#000" text-anchor="start" font-size="11" font-weight="normal" >14:22</text>
<text x="198.5" y="705" fill="#000" text-anchor="end" font-size="11" font-weight="normal" >10.3</text>
<text x="101.5" y="721" fill="#000" text-anchor="start" font-size="11" font-weight="normal" >(+ 0.81 )</text>
<text x="198.5" y="721" fill="#000" text-anchor="end" font-size="11" font-weight="normal" >5.71</text>
<text x="212.5" y="673" fill="#000" text-anchor="start" font-size="11" font-weight="bold" letter-spacing="0.35">Windchill</text>
<text x="316.5" y="673" fill="#000" text-anchor="end" font-size="11" font-weight="bold" letter-spacing="0.35">°C</text>
<text x="218.5" y="689" fill="#000" text-anchor="start" font-size="11" font-weight="normal" >00:26</text>
<text x="316.5" y="689" fill="#000" text-anchor="end" font-size="11" font-weight="normal" >-0.9</text>
<text x="218.5" y="705" fill="#000" text-anchor="start" font-size="11" font-weight="normal" >14:22</text>
<text x="316.5" y="705" fill="#000" text-anchor="end" font-size="11" font-weight="normal" >10.3</text>
<text x="316.5" y="721" fill="#000" text-anchor="end" font-size="11" font-weight="normal" >4.0</text>
<text x="330.5" y="673" fill="#000" text-anchor="start" font-size="11" font-weight="bold" letter-spacing="0.35">Temp. Boden</text>
<text x="434.5" y="673" fill="#000" text-anchor="end" font-size="11" font-weight="bold" letter-spacing="0.35">°C</text>
<text x="336.5" y="689" fill="#000" text-anchor="start" font-size="11" font-weight="normal" >00:20</text>
<text x="434.5" y="689" fill="#000" text-anchor="end" font-size="11" font-weight="normal" >0.2</text>
<text x="336.5" y="705" fill="#000" text-anchor="start" font-size="11" font-weight="normal" >14:24</text>
<text x="434.5" y="705" fill="#000" text-anchor="end" font-size="11" font-weight="normal" >10.3</text>
<text x="434.5" y="721" fill="#000" text-anchor="end" font-size="11" font-weight="normal" >5.73</text>
<text x="448.5" y="673" fill="#000" text-anchor="start" font-size="11" font-weight="bold" letter-spacing="0.35">Luftdruck</text>
<text x="553.5" y="673" fill="#000" text-anchor="end" font-size="11" font-weight="bold" letter-spacing="0.35">hPa</text>
<text x="454.5" y="689" fill="#000" text-anchor="start" font-size="11" font-weight="normal" >12:12</text>
<text x="553.5" y="689" fill="#000" text-anchor="end" font-size="11" font-weight="normal" >982.7</text>
<text x="454.5" y="705" fill="#000" text-anchor="start" font-size="11" font-weight="normal" >00:20</text>
<text x="553.5" y="705" fill="#000" text-anchor="end" font-size="11" font-weight="normal" >992.9</text>
<text x="448.5" y="721" fill="#000" text-anchor="start" font-size="11" font-weight="normal" >^2.0hPa/h</text>
<text x="553.5" y="721" fill="#000" text-anchor="end" font-size="11" font-weight="normal" >987.0</text>
<text x="567.5" y="673" fill="#000" text-anchor="start" font-size="11" font-weight="bold" letter-spacing="0.35">Windböen</text>
<text x="671.5" y="673" fill="#000" text-anchor="end" font-size="11" font-weight="bold" letter-spacing="0.35">km/h</text>
<text x="567.5" y="689" fill="#000" text-anchor="start" font-size="11" font-weight="normal" >Ø 10 min.</text>
<text x="671.5" y="689" fill="#000" text-anchor="end" font-size="11" font-weight="normal" >9.8</text>
<text x="573.5" y="705" fill="#000" text-anchor="start" font-size="11" font-weight="normal" >18:12</text>
<text x="671.5" y="705" fill="#000" text-anchor="end" font-size="11" font-weight="normal" >S-SW 24.0</text>
<text x="573.5" y="721" fill="#000" text-anchor="start" font-size="11" font-weight="normal" >263.6 km</text>
<text x="671.5" y="721" fill="#000" text-anchor="end" font-size="11" font-weight="normal" >11.0</text>
<text x="685.5" y="673" fill="#000" text-anchor="start" font-size="11" font-weight="bold" letter-spacing="0.35">Regen</text>
<text x="789.5" y="673" fill="#000" text-anchor="end" font-size="11" font-weight="bold" letter-spacing="0.35">l/m²</text>
<text x="685.5" y="689" fill="#000" text-anchor="start" font-size="11" font-weight="normal" >5:08 h</text>
<text x="691.5" y="705" fill="#000" text-anchor="start" font-size="11" font-weight="normal" >08:54</text>
<text x="789.5" y="705" fill="#000" text-anchor="end" font-size="11" font-weight="normal" >0.4</text>
<text x="685.5" y="721" fill="#000" text-anchor="start" font-size="11" font-weight="normal" >Gesamt:</text>
<text x="789.5" y="721" fill="#000" text-anchor="end" font-size="11" font-weight="normal" >20.1</text>
<text x="803.5" y="673" fill="#000" text-anchor="start" font-size="11" font-weight="bold" letter-spacing="0.35">Sonne-Zeit</text>
<text x="906.5" y="673" fill="#000" text-anchor="end" font-size="11" font-weight="bold" letter-spacing="0.35">min</text>
<text x="809.5" y="705" fill="#000" text-anchor="start" font-size="11" font-weight="normal" >14:26</text>
<text x="906.5" y="705" fill="#000" text-anchor="end" font-size="11" font-weight="normal" >2</text>
<text x="803.5" y="721" fill="#000" text-anchor="start" font-size="11" font-weight="normal" >26 min.</text>
<text x="906.5" y="721" fill="#000" text-anchor="end" font-size="11" font-weight="normal" >0.0</text>
<text x="920" y="673" fill="#000" text-anchor="start" font-size="11" font-weight="normal" >Wolkenunterg</text>
<text x="1022" y="673" fill="#000" text-anchor="end" font-size="11" font-weight="normal" >113m</text>
<text x="920" y="689" fill="#000" text-anchor="start" font-size="11" font-weight="normal" >Sichtweite</text>
<text x="1022" y="689" fill="#000" text-anchor="end" font-size="11" font-weight="normal" >6-12km</text>
<text x="920" y="705" fill="#000" text-anchor="start" font-size="11" font-weight="normal" >Regen/Tag</text>
<text x="1022" y="705" fill="#000" text-anchor="end" font-size="11" font-weight="normal" >20.1l/m²</text>
<text x="920" y="721" fill="#000" text-anchor="start" font-size="11" font-weight="normal" >Neumond</text>
<text x="1022" y="721" fill="#000" text-anchor="end" font-size="11" font-weight="normal" >16.11.09</text>
</svg></body></html>
